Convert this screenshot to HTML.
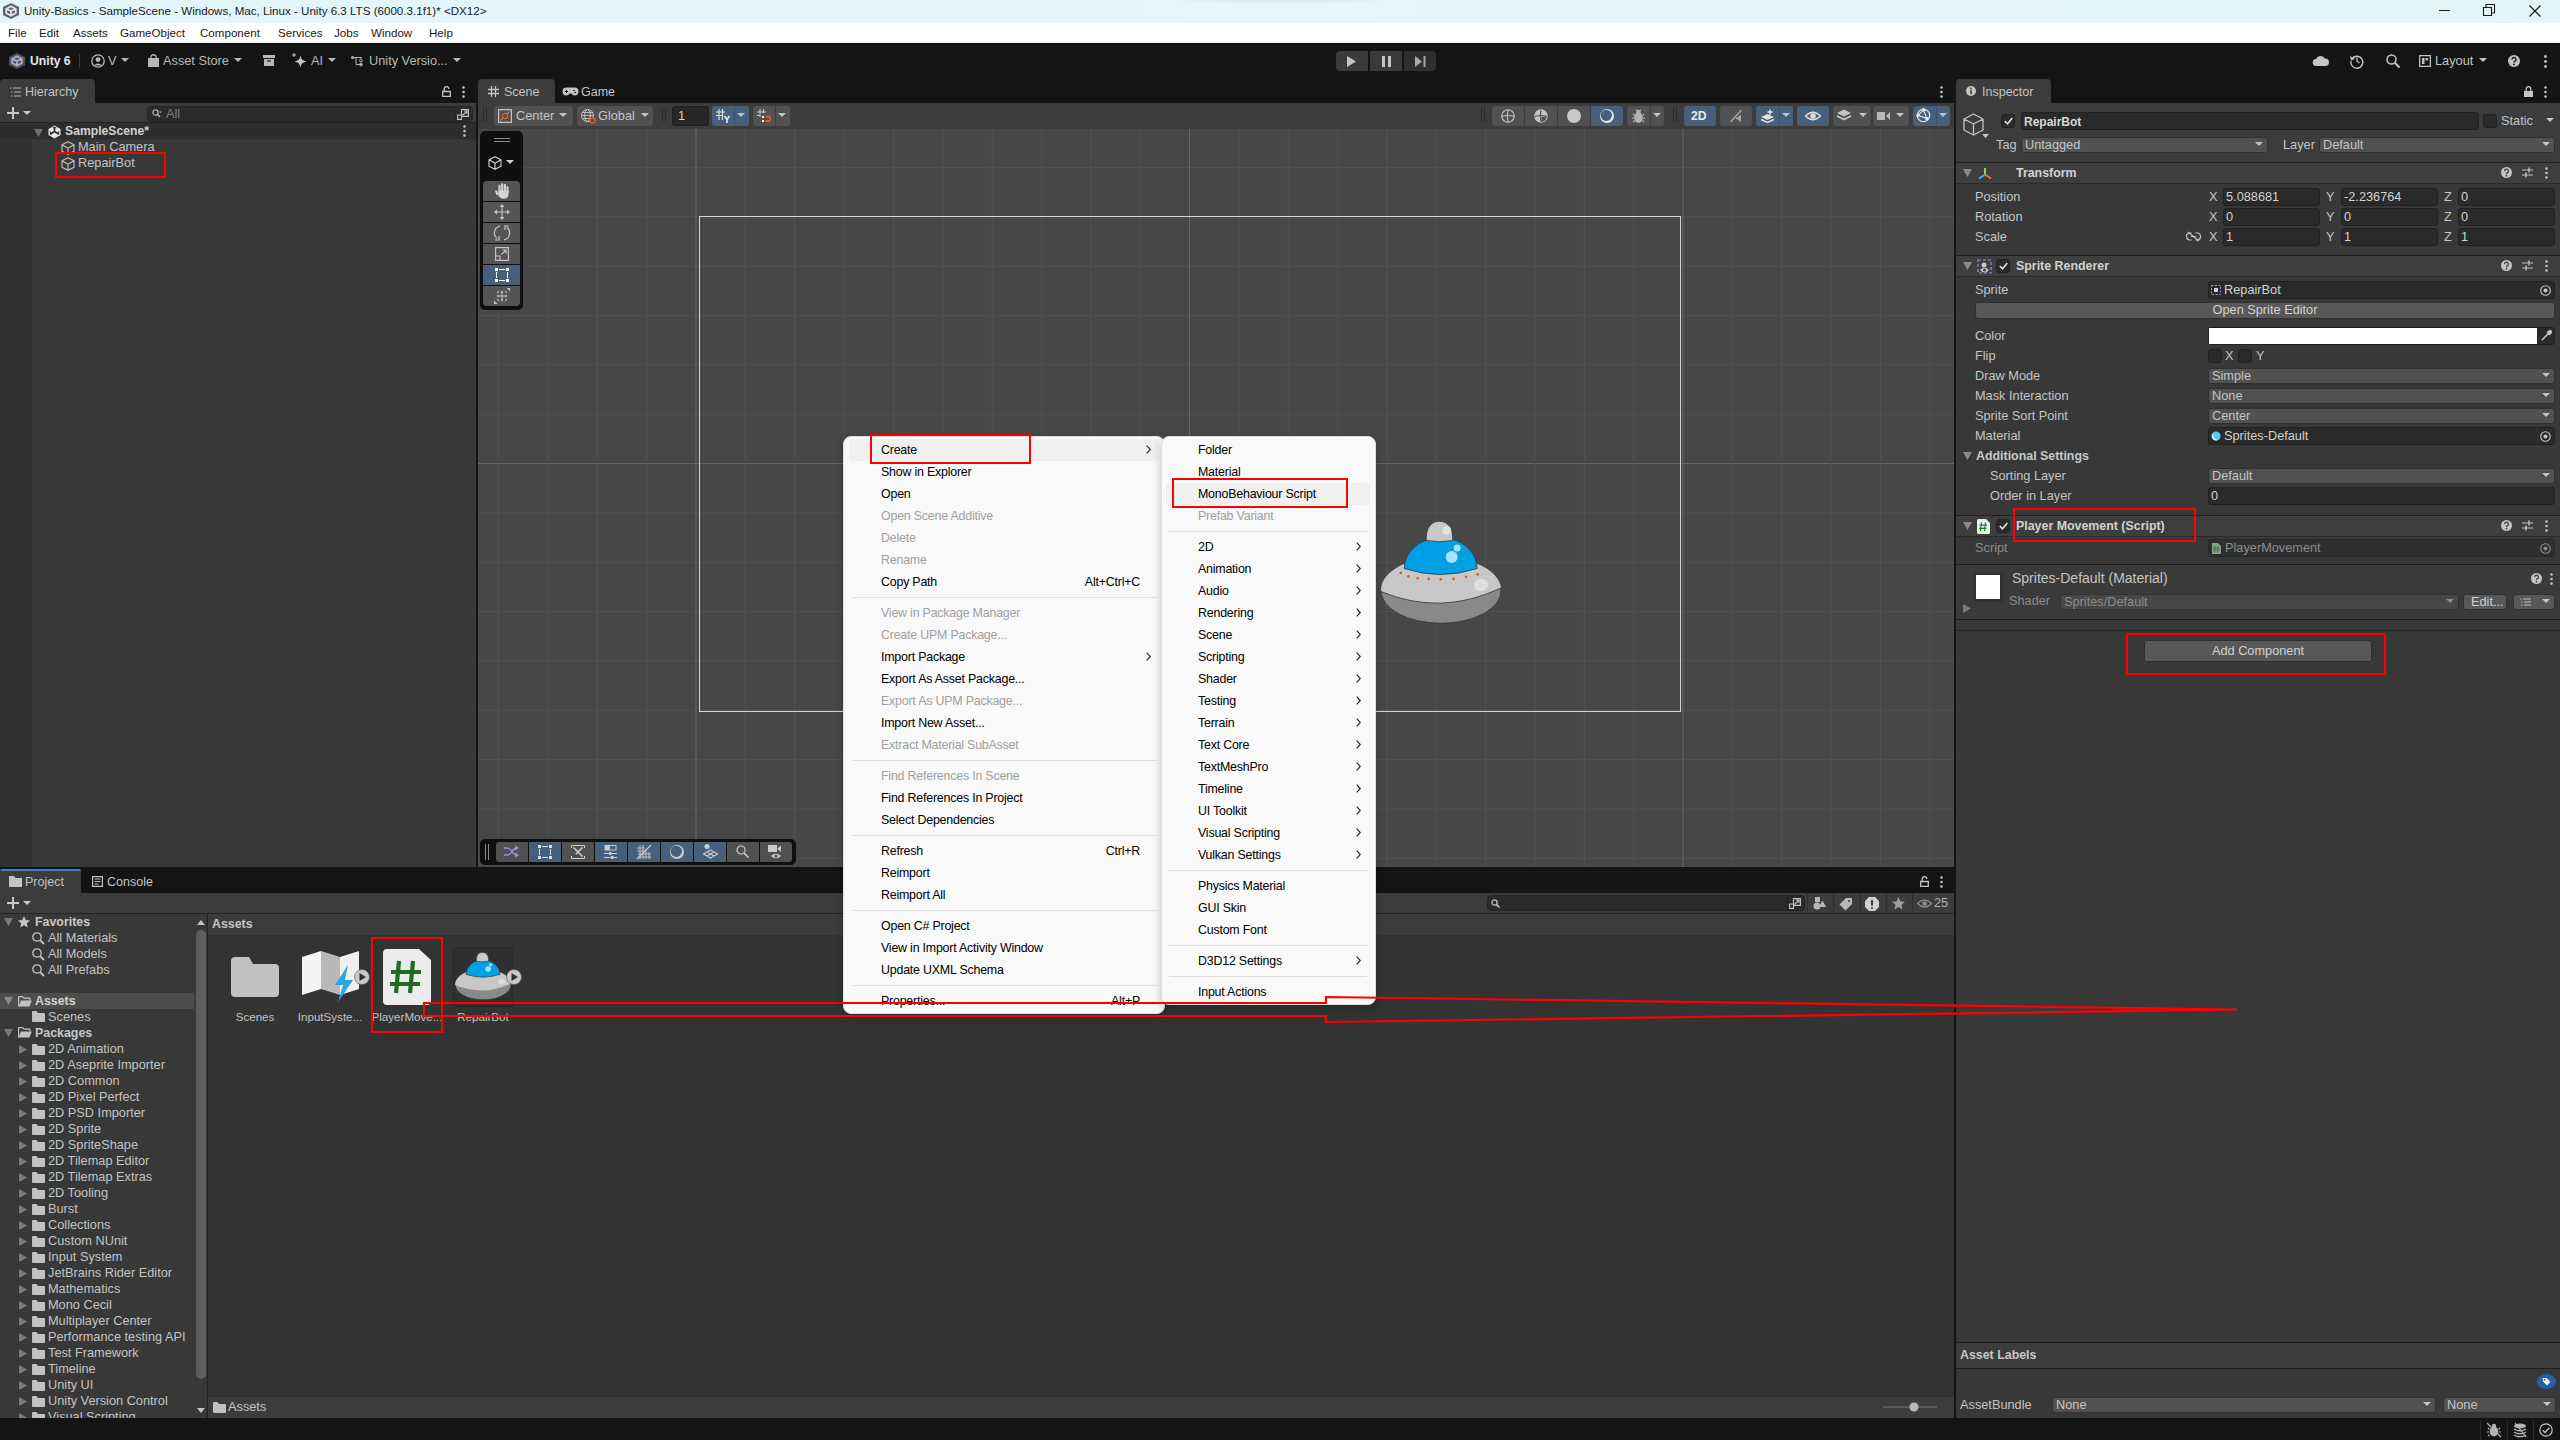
<!DOCTYPE html>
<html><head><meta charset="utf-8"><style>
*{margin:0;padding:0;box-sizing:border-box}
html,body{width:2560px;height:1440px;overflow:hidden;background:#141414;font-family:"Liberation Sans",sans-serif;font-size:12.75px;color:#c4c4c4}
.a{position:absolute}
.t{position:absolute;white-space:nowrap;line-height:14px;height:14px}
.b{font-weight:bold}
svg.i{position:absolute;overflow:visible}
.mi{position:absolute;white-space:nowrap;font-size:12px;line-height:14px;color:#1a1a1a}
.cm{position:absolute;white-space:nowrap;font-size:12.4px;line-height:14px;color:#000;letter-spacing:-0.2px;margin-top:1px}
.cm.d{color:#a0a0a0}
.fld{position:absolute;background:#2a2a2a;border:1px solid #212121;border-radius:3px}
.dd{position:absolute;background:#515151;border:1px solid #303030;border-radius:3px}
.btn{position:absolute;background:#585858;border:1px solid #303030;border-radius:3px}
</style></head><body>
<div class="a" style="left:0px;top:0px;width:2560px;height:23px;background:linear-gradient(90deg,#e2f5f9 0%,#e4f6fa 45%,#e7f7fb 50%,#e4f6fa 55%,#e2f5f9 100%)"></div>
<div class="a" style="left:1160px;top:-6px;width:240px;height:10px;background:radial-gradient(ellipse at center,rgba(150,170,170,0.28) 0%,rgba(150,170,170,0) 70%)"></div>
<svg class="i" style="left:3px;top:3px;" width="16" height="16" viewBox="0 0 16 16"><path d="M8.0 0L16 4.0V12.0L8.0 16L0 12.0V4.0Z" fill="#5a6470"/><path d="M8.0 3.2L12.8 5.92V10.08L8.0 12.8L3.2 10.08V5.92Z M8.0 8.0L12.8 5.92 M8.0 8.0L3.2 5.92 M8.0 8.0V12.8" fill="none" stroke="#dfe3e8" stroke-width="1.8"/></svg>
<div class="t" style="left:24px;top:4px;font-size:11.6px;color:#1a1a1a">Unity-Basics - SampleScene - Windows, Mac, Linux - Unity 6.3 LTS (6000.3.1f1)* &lt;DX12&gt;</div>
<div class="a" style="left:2439px;top:10px;width:11px;height:1px;background:#1a1a1a"></div>
<svg class="i" style="left:2483px;top:4px;" width="12" height="12" viewBox="0 0 12 12"><path d="M0.5 3.5H8.5V11.5H0.5Z M3 3.5V0.5H11.5V9H8.5" fill="none" stroke="#1a1a1a" stroke-width="1.1"/></svg>
<svg class="i" style="left:2529px;top:5px;" width="12" height="12" viewBox="0 0 12 12"><path d="M0.5 0.5L11.5 11.5M11.5 0.5L0.5 11.5" stroke="#1a1a1a" stroke-width="1.2"/></svg>
<div class="a" style="left:0px;top:23px;width:2560px;height:20px;background:#fff"></div>
<div class="a" style="left:0px;top:42px;width:2560px;height:1px;background:#ececec"></div>
<div class="mi" style="left:8px;top:26px;font-size:11.6px">File</div>
<div class="mi" style="left:39px;top:26px;font-size:11.6px">Edit</div>
<div class="mi" style="left:73px;top:26px;font-size:11.6px">Assets</div>
<div class="mi" style="left:120px;top:26px;font-size:11.6px">GameObject</div>
<div class="mi" style="left:200px;top:26px;font-size:11.6px">Component</div>
<div class="mi" style="left:278px;top:26px;font-size:11.6px">Services</div>
<div class="mi" style="left:334px;top:26px;font-size:11.6px">Jobs</div>
<div class="mi" style="left:371px;top:26px;font-size:11.6px">Window</div>
<div class="mi" style="left:429px;top:26px;font-size:11.6px">Help</div>
<div class="a" style="left:0px;top:43px;width:2560px;height:36px;background:#141414"></div>
<svg class="i" style="left:9px;top:53px;" width="16" height="16" viewBox="0 0 16 16"><path d="M8.0 0L16 4.0V12.0L8.0 16L0 12.0V4.0Z" fill="#4b5563"/><path d="M8.0 3.2L12.8 5.92V10.08L8.0 12.8L3.2 10.08V5.92Z M8.0 8.0L12.8 5.92 M8.0 8.0L3.2 5.92 M8.0 8.0V12.8" fill="none" stroke="#aab1bb" stroke-width="1.8"/></svg>
<div class="t b" style="left:30px;top:54px;color:#e6e6e6;font-size:12.2px">Unity 6</div>
<div class="a" style="left:79px;top:54px;width:1px;height:14px;background:#3a3a3a"></div>
<svg class="i" style="left:91px;top:54px;" width="14" height="14" viewBox="0 0 14 14"><circle cx="7" cy="7" r="6.2" fill="none" stroke="#b8b8b8" stroke-width="1.3"/><circle cx="7" cy="5.6" r="2.4" fill="#b8b8b8"/><path d="M2.8 11.5Q7 7.5 11.2 11.5" fill="#b8b8b8"/></svg>
<div class="t " style="left:108px;top:54px;color:#b8b8b8">V</div>
<svg class="i" style="left:121px;top:58px;" width="8" height="5" viewBox="0 0 8 5"><path d="M0 0H8L4 4Z" fill="#b8b8b8"/></svg>
<svg class="i" style="left:148px;top:54px;" width="11" height="13" viewBox="0 0 11 13"><path d="M0 4H11V13H0Z" fill="#b8b8b8"/><path d="M3 4V2Q5.5 -0.5 8 2V4" fill="none" stroke="#b8b8b8" stroke-width="1.2"/></svg>
<div class="t " style="left:163px;top:54px;color:#b8b8b8">Asset Store</div>
<svg class="i" style="left:234px;top:58px;" width="8" height="5" viewBox="0 0 8 5"><path d="M0 0H8L4 4Z" fill="#b8b8b8"/></svg>
<svg class="i" style="left:263px;top:55px;" width="12" height="11" viewBox="0 0 12 11"><path d="M0 0H12V3H0Z M1 4H11V11H1Z" fill="#b8b8b8"/><path d="M4 6H8" stroke="#141414" stroke-width="1.2"/></svg>
<svg class="i" style="left:292px;top:53px;" width="15" height="15" viewBox="0 0 15 15"><path d="M8.5 2.5Q9.2 7.8 14.5 8.5Q9.2 9.2 8.5 14.5Q7.8 9.2 2.5 8.5Q7.8 7.8 8.5 2.5Z" fill="#c4c4c4"/><path d="M2 0V4M0 2H4" stroke="#c4c4c4" stroke-width="1.1"/></svg>
<div class="t " style="left:311px;top:54px;color:#b8b8b8">AI</div>
<svg class="i" style="left:328px;top:58px;" width="8" height="5" viewBox="0 0 8 5"><path d="M0 0H8L4 4Z" fill="#b8b8b8"/></svg>
<svg class="i" style="left:351px;top:56px;" width="12" height="10" viewBox="0 0 12 10"><circle cx="1.5" cy="1.5" r="1.5" fill="#b8b8b8"/><path d="M1.5 1.5H11M5 1.5V8.5H11" fill="none" stroke="#b8b8b8" stroke-width="1"/><circle cx="10" cy="4.5" r="1.4" fill="none" stroke="#b8b8b8"/><circle cx="10" cy="8.5" r="1.4" fill="none" stroke="#b8b8b8"/></svg>
<div class="t " style="left:369px;top:54px;color:#b8b8b8">Unity Versio...</div>
<svg class="i" style="left:453px;top:58px;" width="8" height="5" viewBox="0 0 8 5"><path d="M0 0H8L4 4Z" fill="#b8b8b8"/></svg>
<div class="a" style="left:1336px;top:51px;width:32px;height:20px;background:#3a3a3a;border-radius:4px 0 0 4px"></div>
<div class="a" style="left:1370px;top:51px;width:32px;height:20px;background:#3a3a3a"></div>
<div class="a" style="left:1404px;top:51px;width:32px;height:20px;background:#2e2e2e;border-radius:0 4px 4px 0"></div>
<svg class="i" style="left:1347px;top:56px;" width="10" height="11" viewBox="0 0 10 11"><path d="M0 0L9 5.5L0 11Z" fill="#c4c4c4"/></svg>
<svg class="i" style="left:1382px;top:56px;" width="9" height="11" viewBox="0 0 9 11"><path d="M0 0H3V11H0Z M6 0H9V11H6Z" fill="#c4c4c4"/></svg>
<svg class="i" style="left:1415px;top:56px;" width="11" height="11" viewBox="0 0 11 11"><path d="M0 0L7 5.5L0 11Z M8.5 0H10.5V11H8.5Z" fill="#a8a8a8"/></svg>
<svg class="i" style="left:2313px;top:55px;" width="16" height="11" viewBox="0 0 16 11"><path d="M3.5 11A3.5 3.5 0 0 1 3 4A5 5 0 0 1 12 3.5A3.7 3.7 0 0 1 12.5 11Z" fill="#c4c4c4"/></svg>
<svg class="i" style="left:2350px;top:54px;" width="14" height="14" viewBox="0 0 14 14"><path d="M2.2 4.5A6 6 0 1 1 1 7" fill="none" stroke="#c4c4c4" stroke-width="1.4"/><path d="M0 2L1 6.5L5 5Z" fill="#c4c4c4"/><path d="M7 3.5V7.2L9.5 9" fill="none" stroke="#c4c4c4" stroke-width="1.3"/></svg>
<svg class="i" style="left:2386px;top:54px;" width="14" height="14" viewBox="0 0 14 14"><circle cx="5.5" cy="5.5" r="4.5" fill="none" stroke="#c4c4c4" stroke-width="1.5"/><path d="M9 9L13.5 13.5" stroke="#c4c4c4" stroke-width="2"/></svg>
<svg class="i" style="left:2419px;top:55px;" width="12" height="12" viewBox="0 0 12 12"><path d="M0.7 0.7H11.3V11.3H0.7Z" fill="none" stroke="#c4c4c4" stroke-width="1.3"/><path d="M3 3H5.5V9H3Z M6.5 3H9V5.5H6.5Z" fill="#c4c4c4"/></svg>
<div class="t " style="left:2435px;top:54px;color:#c4c4c4">Layout</div>
<svg class="i" style="left:2479px;top:58px;" width="8" height="5" viewBox="0 0 8 5"><path d="M0 0H8L4 4Z" fill="#c4c4c4"/></svg>
<svg class="i" style="left:2508px;top:55px;" width="12" height="12" viewBox="0 0 12 12"><circle cx="6" cy="6" r="6" fill="#c4c4c4"/><path d="M4 4.6A2 2 0 1 1 6.8 6.3Q6 6.8 6 7.6" fill="none" stroke="#141414" stroke-width="1.4"/><circle cx="6" cy="9.4" r="0.9" fill="#141414"/></svg>
<svg class="i" style="left:2544px;top:55px;" width="3" height="13" viewBox="0 0 3 13"><circle cx="1.5" cy="1.5" r="1.4" fill="#c4c4c4"/><circle cx="1.5" cy="6.5" r="1.4" fill="#c4c4c4"/><circle cx="1.5" cy="11.5" r="1.4" fill="#c4c4c4"/></svg>
<div class="a" style="left:0px;top:79px;width:95px;height:24px;background:#3c3c3c;border-radius:4px 4px 0 0"></div>
<svg class="i" style="left:10px;top:87px;" width="11" height="10" viewBox="0 0 11 10"><path d="M3 1H11M4 5H11M4 9H11" stroke="#b8b8b8" stroke-width="1.2"/><path d="M0 1H1.5M1 5H2.5M1 9H2.5" stroke="#b8b8b8" stroke-width="1.2"/></svg>
<div class="t " style="left:25px;top:85px;color:#c4c4c4;font-size:12.5px">Hierarchy</div>
<svg class="i" style="left:442px;top:86px;" width="9" height="11" viewBox="0 0 9 11"><path d="M0.7 5.5H8.3V10.3H0.7Z" fill="none" stroke="#c4c4c4" stroke-width="1.3"/><path d="M2.2 5.5V3A2.3 2.3 0 0 1 6.8 3" fill="none" stroke="#c4c4c4" stroke-width="1.3"/></svg>
<svg class="i" style="left:462px;top:86px;" width="3" height="12" viewBox="0 0 3 12"><circle cx="1.5" cy="1.5" r="1.3" fill="#c4c4c4"/><circle cx="1.5" cy="6" r="1.3" fill="#c4c4c4"/><circle cx="1.5" cy="10.5" r="1.3" fill="#c4c4c4"/></svg>
<div class="a" style="left:0px;top:103px;width:477px;height:20px;background:#3c3c3c"></div>
<svg class="i" style="left:7px;top:107px;" width="12" height="12" viewBox="0 0 12 12"><path d="M6 0V12M0 6H12" stroke="#c8c8c8" stroke-width="2"/></svg><svg class="i" style="left:23px;top:111px;" width="8" height="4" viewBox="0 0 8 4"><path d="M0 0H8L4 4Z" fill="#c8c8c8"/></svg>
<div class="a" style="left:147px;top:106px;width:326px;height:16px;background:#2a2a2a;border:1px solid #242424;border-radius:4px"></div>
<svg class="i" style="left:152px;top:109px;" width="10" height="9" viewBox="0 0 10 9"><circle cx="3.5" cy="3.5" r="2.6" fill="none" stroke="#b0b0b0" stroke-width="1.3"/><path d="M5.4 5.4L8 8" stroke="#b0b0b0" stroke-width="1.5"/><path d="M7 2.5H10L8.5 4Z" fill="#b0b0b0"/></svg>
<div class="t " style="left:166px;top:107px;color:#7f7f7f">All</div>
<div class="a" style="left:455px;top:107px;width:1px;height:14px;background:#242424"></div>
<svg class="i" style="left:457px;top:109px;" width="12" height="11" viewBox="0 0 12 11"><path d="M4.5 0.6H11.4V7.4H4.5Z M0.6 6H4.5V10.4H0.6Z" fill="none" stroke="#c4c4c4" stroke-width="1.1"/><path d="M5.5 6.5L10 2M7 2H10V5" fill="none" stroke="#c4c4c4" stroke-width="1.1"/></svg>
<div class="a" style="left:0px;top:122px;width:477px;height:1px;background:#232323"></div>
<div class="a" style="left:0px;top:123px;width:477px;height:744px;background:#383838"></div>
<div class="a" style="left:0px;top:139px;width:32px;height:728px;background:#313131"></div>
<div class="a" style="left:0px;top:123px;width:477px;height:16px;background:#2d2d2d"></div>
<div class="a" style="left:0px;top:139px;width:477px;height:1px;background:#353535"></div>
<svg class="i" style="left:34px;top:129px;" width="9" height="8" viewBox="0 0 9 8"><path d="M0 0H9L4.5 8Z" fill="#6f6f6f"/></svg>
<svg class="i" style="left:48px;top:125px;" width="13" height="14" viewBox="0 0 13 14"><path d="M6.5 0.5L12.5 4V10L6.5 13.5L0.5 10V4Z" fill="#e8e8e8"/><path d="M6.5 1.8V6.5M6.5 6.5L2 9.2M6.5 6.5L11 9.2" stroke="#2d2d2d" stroke-width="1.6"/><path d="M4.7 2.8H8.3M1.8 6.2L3.6 9.4M11.2 6.2L9.4 9.4" stroke="#2d2d2d" stroke-width="1"/></svg>
<div class="t b" style="left:65px;top:124px;color:#d2d2d2;font-size:12.2px">SampleScene*</div>
<svg class="i" style="left:463px;top:125px;" width="3" height="12" viewBox="0 0 3 12"><circle cx="1.5" cy="1.5" r="1.3" fill="#c4c4c4"/><circle cx="1.5" cy="6" r="1.3" fill="#c4c4c4"/><circle cx="1.5" cy="10.5" r="1.3" fill="#c4c4c4"/></svg>
<svg class="i" style="left:61px;top:141px;" width="14" height="14" viewBox="0 0 14 14"><path d="M7.0 0.8L13 3.7800000000000002V10.219999999999999L7.0 13.2L1 10.219999999999999V3.7800000000000002Z M1 3.7800000000000002L7.0 7.28L13 3.7800000000000002 M7.0 7.28V13.2" fill="none" stroke="#c4c4c4" stroke-width="1.1" stroke-linejoin="round"/></svg>
<div class="t " style="left:78px;top:140px;color:#c4c4c4">Main Camera</div>
<svg class="i" style="left:61px;top:157px;" width="14" height="14" viewBox="0 0 14 14"><path d="M7.0 0.8L13 3.7800000000000002V10.219999999999999L7.0 13.2L1 10.219999999999999V3.7800000000000002Z M1 3.7800000000000002L7.0 7.28L13 3.7800000000000002 M7.0 7.28V13.2" fill="none" stroke="#c4c4c4" stroke-width="1.1" stroke-linejoin="round"/></svg>
<div class="t " style="left:78px;top:156px;color:#c4c4c4">RepairBot</div>
<div class="a" style="left:55px;top:152px;width:111px;height:26px;border:2px solid #f00"></div>
<div class="a" style="left:476px;top:79px;width:2px;height:788px;background:#141414"></div>
<div class="a" style="left:478px;top:79px;width:77px;height:24px;background:#3c3c3c;border-radius:4px 4px 0 0"></div>
<svg class="i" style="left:488px;top:86px;" width="11" height="11" viewBox="0 0 11 11"><path d="M3.5 0V11M7.5 0V11M0 3.5H11M0 7.5H11" stroke="#c4c4c4" stroke-width="1.3"/></svg>
<div class="t " style="left:504px;top:85px;font-size:12.5px">Scene</div>
<svg class="i" style="left:563px;top:87px;" width="15" height="9" viewBox="0 0 15 9"><path d="M3.5 0.5H11.5A3.5 3.5 0 0 1 11.5 8.5Q9.5 8.5 8.5 6.5H6.5Q5.5 8.5 3.5 8.5A3.5 3.5 0 0 1 3.5 0.5Z" fill="#c4c4c4"/><path d="M2 4.5H5M3.5 3V6" stroke="#141414" stroke-width="1"/><circle cx="11" cy="3.5" r="0.8" fill="#141414"/><circle cx="12.2" cy="5.5" r="0.8" fill="#141414"/></svg>
<div class="t " style="left:581px;top:85px;font-size:12.5px">Game</div>
<svg class="i" style="left:1940px;top:86px;" width="3" height="12" viewBox="0 0 3 12"><circle cx="1.5" cy="1.5" r="1.3" fill="#c4c4c4"/><circle cx="1.5" cy="6" r="1.3" fill="#c4c4c4"/><circle cx="1.5" cy="10.5" r="1.3" fill="#c4c4c4"/></svg>
<div class="a" style="left:478px;top:103px;width:1476px;height:26px;background:#3c3c3c"></div>
<div class="a" style="left:483px;top:108px;width:1px;height:14px;background:#2a2a2a"></div><div class="a" style="left:486px;top:108px;width:1px;height:14px;background:#2a2a2a"></div>
<div class="a" style="left:494px;top:106px;width:79px;height:20px;background:#515151;border-radius:3px"></div>
<svg class="i" style="left:498px;top:109px;" width="14" height="14" viewBox="0 0 14 14"><path d="M0.6 0.6H13.4V13.4H0.6Z" fill="none" stroke="#c4c4c4" stroke-width="1.2"/><path d="M2.5 11.5L11.5 2.5" stroke="#c4c4c4" stroke-width="0.8"/><circle cx="7" cy="7" r="2.6" fill="#515151" stroke="#ee5a24" stroke-width="1.3"/></svg>
<div class="t " style="left:516px;top:109px;">Center</div>
<svg class="i" style="left:559px;top:113px;" width="8" height="5" viewBox="0 0 8 5"><path d="M0 0H8L4 4Z" fill="#c4c4c4"/></svg>
<div class="a" style="left:577px;top:106px;width:76px;height:20px;background:#515151;border-radius:3px"></div>
<svg class="i" style="left:581px;top:109px;" width="15" height="15" viewBox="0 0 15 15"><circle cx="6.5" cy="6.5" r="6" fill="none" stroke="#c4c4c4" stroke-width="1"/><ellipse cx="6.5" cy="6.5" rx="2.8" ry="6" fill="none" stroke="#c4c4c4" stroke-width="1"/><path d="M0.5 6.5H12.5M1.5 3.5H11.5M1.5 9.5H11.5" stroke="#c4c4c4" stroke-width="0.9"/><circle cx="11.5" cy="11.5" r="2.6" fill="#515151" stroke="#ee5a24" stroke-width="1.3"/></svg>
<div class="t " style="left:598px;top:109px;">Global</div>
<svg class="i" style="left:641px;top:113px;" width="8" height="5" viewBox="0 0 8 5"><path d="M0 0H8L4 4Z" fill="#c4c4c4"/></svg>
<div class="a" style="left:662px;top:108px;width:1px;height:14px;background:#2a2a2a"></div><div class="a" style="left:665px;top:108px;width:1px;height:14px;background:#2a2a2a"></div>
<div class="a" style="left:672px;top:106px;width:37px;height:20px;background:#262626;border:1px solid #1e1e1e;border-radius:3px"></div>
<div class="t " style="left:678px;top:109px;color:#d2d2d2">1</div>
<div class="a" style="left:712px;top:106px;width:37px;height:20px;background:#46607c;border-radius:3px"></div>
<div class="a" style="left:734px;top:106px;width:1px;height:20px;background:#3a4f69"></div>
<svg class="i" style="left:716px;top:109px;" width="15" height="14" viewBox="0 0 15 14"><path d="M3 0V11M6.5 0V11M0 3H9M0 6.5H7" stroke="#e8e8e8" stroke-width="1.1"/><path d="M8.5 7L11 10.5L13.5 7M11 10.5V14" fill="none" stroke="#e8e8e8" stroke-width="1.6"/></svg>
<svg class="i" style="left:737px;top:113px;" width="8" height="5" viewBox="0 0 8 5"><path d="M0 0H8L4 4Z" fill="#c4c4c4"/></svg>
<div class="a" style="left:753px;top:106px;width:37px;height:20px;background:#515151;border-radius:3px"></div>
<div class="a" style="left:775px;top:106px;width:1px;height:20px;background:#3e3e3e"></div>
<svg class="i" style="left:757px;top:109px;" width="15" height="14" viewBox="0 0 15 14"><path d="M3 0V8M6.5 0V4M0 3H9M0 6.5H2.5" stroke="#d0d0d0" stroke-width="1"/><rect x="5" y="7" width="2" height="2" fill="#fff"/><rect x="5" y="11" width="2" height="2" fill="#fff"/><path d="M9 7.5H11.5A2.3 2.3 0 0 1 11.5 12H8.5" fill="none" stroke="#ee5a24" stroke-width="1.8"/></svg>
<svg class="i" style="left:778px;top:113px;" width="8" height="5" viewBox="0 0 8 5"><path d="M0 0H8L4 4Z" fill="#c4c4c4"/></svg>
<div class="a" style="left:1481px;top:108px;width:1px;height:14px;background:#2a2a2a"></div><div class="a" style="left:1484px;top:108px;width:1px;height:14px;background:#2a2a2a"></div>
<div class="a" style="left:1492px;top:106px;width:32px;height:20px;background:#515151;border-radius:3px 0 0 3px"></div>
<div class="a" style="left:1525px;top:106px;width:32px;height:20px;background:#515151;border-radius:0"></div>
<div class="a" style="left:1558px;top:106px;width:32px;height:20px;background:#515151;border-radius:0"></div>
<div class="a" style="left:1591px;top:106px;width:32px;height:20px;background:#46607c;border-radius:0 3px 3px 0"></div>
<svg class="i" style="left:1501px;top:109px;" width="14" height="14" viewBox="0 0 14 14"><circle cx="7" cy="7" r="6.2" fill="none" stroke="#c4c4c4" stroke-width="1.1"/><path d="M0.8 7.5Q7 5.5 13.2 7.5M7 0.8Q5.5 7 7 13.2" fill="none" stroke="#c4c4c4" stroke-width="1.1"/></svg>
<svg class="i" style="left:1534px;top:109px;" width="14" height="14" viewBox="0 0 14 14"><circle cx="7" cy="7" r="6.2" fill="#c4c4c4" stroke="#c4c4c4" stroke-width="1.1"/><path d="M1 7.5Q7 5.5 13 7.5M7 1Q5.5 7 7 13" fill="none" stroke="#515151" stroke-width="1.1"/><path d="M7.5 7.5L12.5 8A6 6 0 0 1 7.5 13Z" fill="#515151"/></svg>
<svg class="i" style="left:1567px;top:109px;" width="14" height="14" viewBox="0 0 14 14"><circle cx="7" cy="7" r="7" fill="#c8c8c8"/></svg>
<svg class="i" style="left:1600px;top:109px;" width="14" height="14" viewBox="0 0 14 14"><circle cx="7" cy="7" r="7" fill="#e6e6e6"/><circle cx="6.3" cy="6.3" r="5.6" fill="#46607c"/></svg>
<div class="a" style="left:1627px;top:106px;width:37px;height:20px;background:#515151;border-radius:3px"></div>
<div class="a" style="left:1650px;top:106px;width:1px;height:20px;background:#3e3e3e"></div>
<svg class="i" style="left:1632px;top:109px;" width="13" height="14" viewBox="0 0 13 14"><ellipse cx="6.5" cy="8.5" rx="4.3" ry="5.2" fill="#b4b4b4"/><circle cx="6.5" cy="3" r="2.2" fill="#b4b4b4"/><path d="M1 5L2.5 6.5M12 5L10.5 6.5M0 9H2M13 9H11M1 13L2.5 11.5M12 13L10.5 11.5M4 0.5L5 1.8M9 0.5L8 1.8" stroke="#b4b4b4" stroke-width="1.1"/></svg>
<svg class="i" style="left:1653px;top:113px;" width="8" height="5" viewBox="0 0 8 5"><path d="M0 0H8L4 4Z" fill="#c4c4c4"/></svg>
<div class="a" style="left:1673px;top:108px;width:1px;height:14px;background:#2a2a2a"></div><div class="a" style="left:1676px;top:108px;width:1px;height:14px;background:#2a2a2a"></div>
<div class="a" style="left:1684px;top:106px;width:32px;height:20px;background:#46607c;border-radius:3px"></div>
<div class="t b" style="left:1691px;top:109px;color:#e8e8e8;font-size:12.2px">2D</div>
<div class="a" style="left:1720px;top:106px;width:32px;height:20px;background:#515151;border-radius:3px"></div>
<svg class="i" style="left:1729px;top:109px;" width="14" height="14" viewBox="0 0 14 14"><path d="M1.5 13L12.5 1" stroke="#a8a8a8" stroke-width="1.4"/><path d="M6 8.5H8.5L12 5.5V13L8.5 10.5Z" fill="#a8a8a8"/></svg>
<div class="a" style="left:1756px;top:106px;width:37px;height:20px;background:#46607c;border-radius:3px"></div>
<div class="a" style="left:1779px;top:106px;width:1px;height:20px;background:#3a4f69"></div>
<svg class="i" style="left:1760px;top:108px;" width="15" height="15" viewBox="0 0 15 15"><path d="M1 9L7.5 6L14 9L7.5 12Z" fill="#e0e0e0"/><path d="M1 11.5L7.5 14.5L14 11.5" fill="none" stroke="#e0e0e0" stroke-width="1.4"/><path d="M10 0.5L11 3L13.5 4L11 5L10 7.5L9 5L6.5 4L9 3Z" fill="#e0e0e0"/></svg>
<svg class="i" style="left:1782px;top:113px;" width="8" height="5" viewBox="0 0 8 5"><path d="M0 0H8L4 4Z" fill="#c4c4c4"/></svg>
<div class="a" style="left:1797px;top:106px;width:32px;height:20px;background:#46607c;border-radius:3px"></div>
<svg class="i" style="left:1805px;top:111px;" width="16" height="10" viewBox="0 0 16 10"><path d="M0.5 5Q8 -2.5 15.5 5Q8 12.5 0.5 5Z" fill="none" stroke="#dcdcdc" stroke-width="1.3"/><circle cx="8" cy="5" r="2.8" fill="#dcdcdc"/></svg>
<div class="a" style="left:1833px;top:106px;width:38px;height:20px;background:#515151;border-radius:3px"></div>
<svg class="i" style="left:1837px;top:109px;" width="14" height="13" viewBox="0 0 14 13"><path d="M0 4L7 0.5L14 4L7 7.5Z" fill="#c4c4c4"/><path d="M0 7L7 10.5L14 7" fill="none" stroke="#c4c4c4" stroke-width="1.6"/></svg>
<svg class="i" style="left:1859px;top:113px;" width="8" height="5" viewBox="0 0 8 5"><path d="M0 0H8L4 4Z" fill="#c4c4c4"/></svg>
<div class="a" style="left:1873px;top:106px;width:36px;height:20px;background:#515151;border-radius:3px"></div>
<svg class="i" style="left:1877px;top:111px;" width="13" height="10" viewBox="0 0 13 10"><path d="M0 1H8V9H0Z M9 5L13 1V9Z" fill="#b8b8b8"/></svg>
<svg class="i" style="left:1896px;top:113px;" width="8" height="5" viewBox="0 0 8 5"><path d="M0 0H8L4 4Z" fill="#c4c4c4"/></svg>
<div class="a" style="left:1913px;top:106px;width:37px;height:20px;background:#46607c;border-radius:3px"></div>
<div class="a" style="left:1936px;top:106px;width:1px;height:20px;background:#3a4f69"></div>
<svg class="i" style="left:1916px;top:108px;" width="15" height="15" viewBox="0 0 15 15"><circle cx="7.5" cy="7.5" r="6.2" fill="none" stroke="#e6e6e6" stroke-width="1.3"/><path d="M7.5 1.8L2.2 7.2L10.8 10.5Z M2.2 7.2Q7 9 10.8 10.5" fill="none" stroke="#e6e6e6" stroke-width="1.1"/><circle cx="7.5" cy="1.8" r="1.7" fill="#e6e6e6"/><circle cx="2.2" cy="7.2" r="1.7" fill="#e6e6e6"/><circle cx="10.8" cy="10.5" r="1.7" fill="#e6e6e6"/></svg>
<svg class="i" style="left:1939px;top:113px;" width="8" height="5" viewBox="0 0 8 5"><path d="M0 0H8L4 4Z" fill="#c4c4c4"/></svg>
<div class="a" style="left:478px;top:129px;width:1476px;height:738px;background:#474747;overflow:hidden"></div>
<svg class="i" style="left:478px;top:129px" width="1476" height="738"><rect x="0" y="37.90" width="1476" height="1" fill="#515151"/><rect x="0" y="87.25" width="1476" height="1" fill="#515151"/><rect x="0" y="136.60" width="1476" height="1" fill="#515151"/><rect x="0" y="185.95" width="1476" height="1" fill="#515151"/><rect x="0" y="235.30" width="1476" height="1" fill="#515151"/><rect x="0" y="284.65" width="1476" height="1" fill="#515151"/><rect x="0" y="334.00" width="1476" height="1" fill="#666666"/><rect x="0" y="383.35" width="1476" height="1" fill="#515151"/><rect x="0" y="432.70" width="1476" height="1" fill="#515151"/><rect x="0" y="482.05" width="1476" height="1" fill="#515151"/><rect x="0" y="531.40" width="1476" height="1" fill="#515151"/><rect x="0" y="580.75" width="1476" height="1" fill="#515151"/><rect x="0" y="630.10" width="1476" height="1" fill="#515151"/><rect x="0" y="679.45" width="1476" height="1" fill="#515151"/><rect x="0" y="728.80" width="1476" height="1" fill="#515151"/><rect x="20.10" y="0" width="1" height="738" fill="#515151"/><rect x="69.45" y="0" width="1" height="738" fill="#515151"/><rect x="118.80" y="0" width="1" height="738" fill="#515151"/><rect x="168.15" y="0" width="1" height="738" fill="#515151"/><rect x="217.50" y="0" width="1" height="738" fill="#666666"/><rect x="266.85" y="0" width="1" height="738" fill="#515151"/><rect x="316.20" y="0" width="1" height="738" fill="#515151"/><rect x="365.55" y="0" width="1" height="738" fill="#515151"/><rect x="414.90" y="0" width="1" height="738" fill="#515151"/><rect x="464.25" y="0" width="1" height="738" fill="#515151"/><rect x="513.60" y="0" width="1" height="738" fill="#515151"/><rect x="562.95" y="0" width="1" height="738" fill="#515151"/><rect x="612.30" y="0" width="1" height="738" fill="#515151"/><rect x="661.65" y="0" width="1" height="738" fill="#515151"/><rect x="711.00" y="0" width="1" height="738" fill="#666666"/><rect x="760.35" y="0" width="1" height="738" fill="#515151"/><rect x="809.70" y="0" width="1" height="738" fill="#515151"/><rect x="859.05" y="0" width="1" height="738" fill="#515151"/><rect x="908.40" y="0" width="1" height="738" fill="#515151"/><rect x="957.75" y="0" width="1" height="738" fill="#515151"/><rect x="1007.10" y="0" width="1" height="738" fill="#515151"/><rect x="1056.45" y="0" width="1" height="738" fill="#515151"/><rect x="1105.80" y="0" width="1" height="738" fill="#515151"/><rect x="1155.15" y="0" width="1" height="738" fill="#515151"/><rect x="1204.50" y="0" width="1" height="738" fill="#666666"/><rect x="1253.85" y="0" width="1" height="738" fill="#515151"/><rect x="1303.20" y="0" width="1" height="738" fill="#515151"/><rect x="1352.55" y="0" width="1" height="738" fill="#515151"/><rect x="1401.90" y="0" width="1" height="738" fill="#515151"/><rect x="1451.25" y="0" width="1" height="738" fill="#515151"/></svg>
<div class="a" style="left:699px;top:216px;width:982px;height:496px;border:1.5px solid #d6d6d6"></div>
<svg class="i" style="left:0;top:0" width="2560" height="1440"><g transform="translate(1370.7,514.5)" stroke="#333" stroke-width="0.8"><ellipse cx="70.3" cy="76.2" rx="60" ry="32.6" fill="#898989"/><path d="M10.3 77A60 32.6 0 0 1 130.3 73.5Q70 102 10.3 77Z" fill="#c8c8c8" stroke="none"/><path d="M10.3 77Q70 102 130.3 73.5" fill="none"/><path d="M33.5 54A36.5 31 0 0 1 106.5 54Q70 66 33.5 54Z" fill="#00a0e4"/><circle cx="81" cy="42.5" r="6" fill="#a6e2fb" stroke="none"/><circle cx="86.5" cy="33.5" r="3.5" fill="#a6e2fb" stroke="none"/><path d="M55.5 26C55 14 60 6.8 68.75 6.8C77.5 6.8 82.5 14 82 26Q68.75 28.5 55.5 26Z" fill="#c8c8c8"/><circle cx="76.1" cy="15.9" r="4.4" fill="#e0e0e0" stroke="none"/><ellipse cx="110.3" cy="70.5" rx="7" ry="6.3" fill="#dedede" stroke="none"/><circle cx="30.1" cy="58.4" r="1.3" fill="#d0601a" stroke="none"/><circle cx="37.8" cy="61.9" r="1.3" fill="#d0601a" stroke="none"/><circle cx="47" cy="63.8" r="1.3" fill="#d0601a" stroke="none"/><circle cx="57.9" cy="64.4" r="1.3" fill="#d0601a" stroke="none"/><circle cx="70" cy="64.9" r="1.3" fill="#d0601a" stroke="none"/><circle cx="82.9" cy="64.4" r="1.3" fill="#d0601a" stroke="none"/><circle cx="95.3" cy="62.3" r="1.3" fill="#d0601a" stroke="none"/><circle cx="106.9" cy="59.9" r="1.3" fill="#d0601a" stroke="none"/></g></svg>
<div class="a" style="left:480px;top:131px;width:43px;height:179px;background:#0f0f0f;border-radius:5px"></div>
<div class="a" style="left:494px;top:138px;width:16px;height:1px;background:#8a8a8a"></div><div class="a" style="left:494px;top:141px;width:16px;height:1px;background:#8a8a8a"></div>
<svg class="i" style="left:488px;top:156px;" width="14" height="14" viewBox="0 0 14 14"><path d="M7.0 0.8L13 3.7800000000000002V10.219999999999999L7.0 13.2L1 10.219999999999999V3.7800000000000002Z M1 3.7800000000000002L7.0 7.28L13 3.7800000000000002 M7.0 7.28V13.2" fill="none" stroke="#d8d8d8" stroke-width="1.1" stroke-linejoin="round"/></svg>
<svg class="i" style="left:506px;top:160px;" width="8" height="5" viewBox="0 0 8 5"><path d="M0 0H8L4 4Z" fill="#d0d0d0"/></svg>
<div class="a" style="left:483px;top:181px;width:37px;height:20px;background:#555555;border-radius:4px 4px 0 0"></div>
<div class="a" style="left:483px;top:202px;width:37px;height:20px;background:#555555;border-radius:0"></div>
<div class="a" style="left:483px;top:223px;width:37px;height:20px;background:#555555;border-radius:0"></div>
<div class="a" style="left:483px;top:244px;width:37px;height:20px;background:#555555;border-radius:0"></div>
<div class="a" style="left:483px;top:265px;width:37px;height:20px;background:#46607c;border-radius:0"></div>
<div class="a" style="left:483px;top:286px;width:37px;height:20px;background:#555555;border-radius:0 0 4px 4px"></div>
<svg class="i" style="left:495px;top:183px;" width="15" height="16" viewBox="0 0 15 16"><g stroke="#d4d4d4" stroke-width="2.1" stroke-linecap="round"><path d="M4.5 8V2.8M7.2 7.5V1.2M9.9 7.5V1.8M12.5 8.5V4.2M2.3 11L1.2 8.3"/></g><path d="M3.4 7.5H13.6V10.5Q13.6 15.8 8.5 15.8Q5 15.8 3.2 12Z" fill="#d4d4d4"/></svg>
<svg class="i" style="left:494px;top:204px;" width="16" height="16" viewBox="0 0 16 16"><path d="M8 1V15M1 8H15" stroke="#c4c4c4" stroke-width="1.1"/><path d="M8 0L10.5 3H5.5Z M8 16L10.5 13H5.5Z M0 8L3 5.5V10.5Z M16 8L13 5.5V10.5Z" fill="#c4c4c4"/></svg>
<svg class="i" style="left:494px;top:225px;" width="16" height="16" viewBox="0 0 16 16"><path d="M6 1.2A7 7 0 0 0 3 13.5M10 14.8A7 7 0 0 0 13 2.5" fill="none" stroke="#c4c4c4" stroke-width="1.2"/><path d="M1 15H5V11 M15 1H11V5" fill="none" stroke="#c4c4c4" stroke-width="1.2"/></svg>
<svg class="i" style="left:495px;top:247px;" width="14" height="14" viewBox="0 0 14 14"><path d="M0.6 0.6H13.4V13.4H0.6Z M0.6 9H5V13.4" fill="none" stroke="#c4c4c4" stroke-width="1.2"/><path d="M6.5 7.5L11 3M7.5 3H11V6.5" fill="none" stroke="#c4c4c4" stroke-width="1.1"/></svg>
<svg class="i" style="left:495px;top:268px;" width="14" height="14" viewBox="0 0 14 14"><rect x="0" y="0" width="3" height="3" fill="#fff"/><rect x="11" y="0" width="3" height="3" fill="#fff"/><rect x="0" y="11" width="3" height="3" fill="#fff"/><rect x="11" y="11" width="3" height="3" fill="#fff"/><path d="M4 1.5H10M4 12.5H10M1.5 4V10M12.5 4V10" stroke="#fff" stroke-width="1"/></svg>
<svg class="i" style="left:494px;top:288px;" width="16" height="16" viewBox="0 0 16 16"><path d="M3.2 5A6 6 0 0 1 5 3.2M11 3.2A6 6 0 0 1 12.8 5M12.8 11A6 6 0 0 1 11 12.8M5 12.8A6 6 0 0 1 3.2 11" fill="none" stroke="#c4c4c4" stroke-width="1.1"/><path d="M8 3.5V12.5M3.5 8H12.5" stroke="#c4c4c4" stroke-width="1"/><path d="M8 2.5L9.5 4.5H6.5Z M8 13.5L9.5 11.5H6.5Z M2.5 8L4.5 6.5V9.5Z M13.5 8L11.5 6.5V9.5Z M0 16H3.5L0 12.5Z M16 0H12.5L16 3.5Z" fill="#c4c4c4"/></svg>
<div class="a" style="left:480px;top:839px;width:316px;height:26px;background:#0f0f0f;border-radius:5px"></div>
<div class="a" style="left:485px;top:844px;width:1px;height:16px;background:#8a8a8a"></div><div class="a" style="left:488px;top:844px;width:1px;height:16px;background:#8a8a8a"></div>
<div class="a" style="left:496px;top:842px;width:32px;height:20px;background:#515151;border-radius:3px 0 0 3px"></div>
<div class="a" style="left:529px;top:842px;width:32px;height:20px;background:#46607c;border-radius:0"></div>
<div class="a" style="left:562px;top:842px;width:32px;height:20px;background:#515151;border-radius:0"></div>
<div class="a" style="left:595px;top:842px;width:32px;height:20px;background:#46607c;border-radius:0"></div>
<div class="a" style="left:628px;top:842px;width:32px;height:20px;background:#46607c;border-radius:0"></div>
<div class="a" style="left:661px;top:842px;width:32px;height:20px;background:#46607c;border-radius:0"></div>
<div class="a" style="left:694px;top:842px;width:32px;height:20px;background:#46607c;border-radius:0"></div>
<div class="a" style="left:727px;top:842px;width:32px;height:20px;background:#515151;border-radius:0"></div>
<div class="a" style="left:760px;top:842px;width:32px;height:20px;background:#515151;border-radius:0 3px 3px 0"></div>
<svg class="i" style="left:504px;top:845px;" width="15" height="13" viewBox="0 0 15 13"><path d="M0 3H3Q6 3 8 6.5Q10 10 13 10M0 10H3Q6 10 8 6.5Q10 3 13 3" fill="none" stroke="#a98be8" stroke-width="1.3"/><path d="M11 0.5L15 3L11 5.5Z M11 7.5L15 10L11 12.5Z" fill="#a98be8"/></svg>
<svg class="i" style="left:538px;top:845px;" width="14" height="14" viewBox="0 0 14 14"><rect x="0" y="0" width="3" height="3" fill="#ddd"/><rect x="11" y="0" width="3" height="3" fill="#ddd"/><rect x="0" y="11" width="3" height="3" fill="#ddd"/><rect x="11" y="11" width="3" height="3" fill="#ddd"/><path d="M4 1.5H10M4 12.5H10M1.5 4V10M12.5 4V10" stroke="#ddd" stroke-width="1"/></svg>
<svg class="i" style="left:571px;top:845px;" width="14" height="14" viewBox="0 0 14 14"><path d="M0.5 3V0.5H13.5V3M0.5 11V13.5H13.5V11" fill="none" stroke="#ccc" stroke-width="1"/><path d="M2.5 2.5L11.5 11.5M11.5 2.5L5 9" stroke="#ccc" stroke-width="1.6"/></svg>
<svg class="i" style="left:604px;top:845px;" width="14" height="14" viewBox="0 0 14 14"><rect x="1" y="0.5" width="11" height="4.5" fill="none" stroke="#ccc"/><rect x="1" y="0.5" width="5" height="4.5" fill="#ccc"/><path d="M0 8.5H13M0 12.5H13" stroke="#ccc" stroke-width="1"/><rect x="5" y="7" width="2.5" height="3" fill="#ccc"/><rect x="7" y="11" width="2.5" height="3" fill="#ccc"/></svg>
<svg class="i" style="left:637px;top:845px;" width="14" height="14" viewBox="0 0 14 14"><path d="M3 0V14M6 0V14M9 4V14M12 7V14M0 3H8M0 6H9M1 9H14M1 12H14" stroke="#ccc" stroke-width="0.9"/><path d="M0 14L14 0" stroke="#ccc" stroke-width="1.1"/></svg>
<svg class="i" style="left:670px;top:845px;" width="14" height="14" viewBox="0 0 14 14"><circle cx="7" cy="7" r="7" fill="#cccccc"/><circle cx="6.3" cy="6.3" r="5.6" fill="#46607c"/></svg>
<svg class="i" style="left:703px;top:844px;" width="15" height="16" viewBox="0 0 15 16"><circle cx="4" cy="2.5" r="2.5" fill="#ccc"/><path d="M7.5 6L14.5 10L7.5 14L0.5 10Z M4 8L11 12M11 8L4 12" fill="none" stroke="#ccc" stroke-width="1.1"/></svg>
<svg class="i" style="left:736px;top:845px;" width="13" height="13" viewBox="0 0 13 13"><circle cx="5" cy="5" r="4" fill="none" stroke="#ccc" stroke-width="1.2"/><path d="M8 8L12.5 12.5" stroke="#ccc" stroke-width="1.6"/></svg>
<svg class="i" style="left:768px;top:844px;" width="15" height="16" viewBox="0 0 15 16"><path d="M0 1H9V8H0Z M9.5 4.5L13 1.5V8L9.5 5Z" fill="#ccc"/><path d="M3 12Q8 7.5 13 12Q8 16.5 3 12Z" fill="#ccc"/><circle cx="8" cy="12" r="1.6" fill="#555"/></svg>
<div class="a" style="left:1954px;top:79px;width:2px;height:1339px;background:#141414"></div>
<div class="a" style="left:1956px;top:79px;width:95px;height:24px;background:#3c3c3c;border-radius:4px 4px 0 0"></div>
<svg class="i" style="left:1966px;top:86px;" width="10" height="10" viewBox="0 0 10 10"><circle cx="5" cy="5" r="5" fill="#c4c4c4"/><path d="M5 4.3V8" stroke="#3c3c3c" stroke-width="1.6"/><circle cx="5" cy="2.5" r="0.9" fill="#3c3c3c"/></svg>
<div class="t " style="left:1982px;top:85px;font-size:12.5px">Inspector</div>
<svg class="i" style="left:2524px;top:86px;" width="9" height="11" viewBox="0 0 9 11"><path d="M0 5H9V11H0Z" fill="#c4c4c4"/><path d="M2.2 5.5V3A2.3 2.3 0 0 1 6.8 3V5.5" fill="none" stroke="#c4c4c4" stroke-width="1.3"/></svg>
<svg class="i" style="left:2544px;top:86px;" width="3" height="12" viewBox="0 0 3 12"><circle cx="1.5" cy="1.5" r="1.3" fill="#c4c4c4"/><circle cx="1.5" cy="6" r="1.3" fill="#c4c4c4"/><circle cx="1.5" cy="10.5" r="1.3" fill="#c4c4c4"/></svg>
<div class="a" style="left:1956px;top:103px;width:604px;height:1315px;background:#383838"></div>
<div class="a" style="left:1956px;top:103px;width:604px;height:58px;background:#3c3c3c"></div>
<svg class="i" style="left:1963px;top:113px;" width="21" height="23" viewBox="0 0 21 23"><path d="M10.5 1L20 6V17L10.5 22L1 17V6Z M1 6L10.5 11L20 6 M10.5 11V22" fill="none" stroke="#c4c4c4" stroke-width="1.3" stroke-linejoin="round"/></svg>
<svg class="i" style="left:1982px;top:134px;" width="7" height="4" viewBox="0 0 7 4"><path d="M0 0H7L3.5 4Z" fill="#c4c4c4"/></svg>
<div class="a" style="left:2001px;top:114px;width:14px;height:14px;background:#2a2a2a;border:1px solid #212121;border-radius:3px"></div><svg class="i" style="left:2004px;top:117px;" width="9" height="8" viewBox="0 0 9 8"><path d="M0.8 4L3.5 6.8L8.3 1" fill="none" stroke="#e8e8e8" stroke-width="1.5"/></svg>
<div class="a" style="left:2021px;top:112px;width:458px;height:18px;background:#2a2a2a;border:1px solid #212121;border-radius:3px"></div>
<div class="t b" style="left:2024px;top:115px;color:#d8d8d8;font-size:12px">RepairBot</div>
<div class="a" style="left:2483px;top:114px;width:14px;height:14px;background:#2a2a2a;border:1px solid #212121;border-radius:3px"></div>
<div class="t " style="left:2501px;top:114px;">Static</div>
<svg class="i" style="left:2546px;top:118px;" width="8" height="5" viewBox="0 0 8 5"><path d="M0 0H8L4 4Z" fill="#c4c4c4"/></svg>
<div class="t " style="left:1996px;top:138px;">Tag</div>
<div class="a" style="left:2021px;top:137px;width:247px;height:16px;background:#515151;border:1px solid #303030;border-radius:3px"></div><div class="t " style="left:2025px;top:138.0px;color:#c4c4c4">Untagged</div><svg class="i" style="left:2255px;top:142.0px;" width="8" height="5" viewBox="0 0 8 5"><path d="M0 0H8L4 4Z" fill="#c4c4c4"/></svg>
<div class="t " style="left:2283px;top:138px;">Layer</div>
<div class="a" style="left:2319px;top:137px;width:236px;height:16px;background:#515151;border:1px solid #303030;border-radius:3px"></div><div class="t " style="left:2323px;top:138.0px;color:#c4c4c4">Default</div><svg class="i" style="left:2542px;top:142.0px;" width="8" height="5" viewBox="0 0 8 5"><path d="M0 0H8L4 4Z" fill="#c4c4c4"/></svg>
<div class="a" style="left:1956px;top:162px;width:604px;height:1px;background:#1f1f1f"></div><div class="a" style="left:1956px;top:163px;width:604px;height:20px;background:#3e3e3e"></div><div class="a" style="left:1956px;top:183px;width:604px;height:1px;background:#2a2a2a"></div><svg class="i" style="left:1963px;top:169px;" width="9" height="8" viewBox="0 0 9 8"><path d="M0 0H9L4.5 8Z" fill="#8a8a8a"/></svg><svg class="i" style="left:1978px;top:168px;" width="14" height="12" viewBox="0 0 14 12"><path d="M7 0V6.5" stroke="#8fd44a" stroke-width="2"/><path d="M7 6.5L1 10.5" stroke="#4aa8f0" stroke-width="2"/><path d="M7 6.5L13 10.5" stroke="#f06a3a" stroke-width="2"/></svg><div class="t b" style="left:2016px;top:166px;color:#d2d2d2;font-size:12.4px">Transform</div><svg class="i" style="left:2501px;top:167px;" width="11" height="11" viewBox="0 0 11 11"><circle cx="5.5" cy="5.5" r="5.5" fill="#c4c4c4"/><path d="M3.6 4.2A1.9 1.9 0 1 1 6.2 5.8Q5.5 6.2 5.5 7" fill="none" stroke="#3c3c3c" stroke-width="1.3"/><circle cx="5.5" cy="8.7" r="0.85" fill="#3c3c3c"/></svg><svg class="i" style="left:2522px;top:167px;" width="11" height="11" viewBox="0 0 11 11"><path d="M0 3H11M0 8H11" stroke="#c4c4c4" stroke-width="1.2"/><path d="M7 0.5V5.5M4 5.5V10.5" stroke="#c4c4c4" stroke-width="1.4"/></svg><svg class="i" style="left:2545px;top:167px;" width="3" height="12" viewBox="0 0 3 12"><circle cx="1.5" cy="1.5" r="1.3" fill="#c4c4c4"/><circle cx="1.5" cy="6" r="1.3" fill="#c4c4c4"/><circle cx="1.5" cy="10.5" r="1.3" fill="#c4c4c4"/></svg>
<div class="t " style="left:1975px;top:190px;">Position</div>
<div class="t " style="left:2209px;top:190px;">X</div>
<div class="a" style="left:2223px;top:188px;width:97px;height:18px;background:#2a2a2a;border:1px solid #212121;border-radius:3px"></div>
<div class="t " style="left:2226px;top:190px;color:#d2d2d2">5.088681</div>
<div class="t " style="left:2326px;top:190px;">Y</div>
<div class="a" style="left:2341px;top:188px;width:97px;height:18px;background:#2a2a2a;border:1px solid #212121;border-radius:3px"></div>
<div class="t " style="left:2344px;top:190px;color:#d2d2d2">-2.236764</div>
<div class="t " style="left:2444px;top:190px;">Z</div>
<div class="a" style="left:2458px;top:188px;width:97px;height:18px;background:#2a2a2a;border:1px solid #212121;border-radius:3px"></div>
<div class="t " style="left:2461px;top:190px;color:#d2d2d2">0</div>
<div class="t " style="left:1975px;top:210px;">Rotation</div>
<div class="t " style="left:2209px;top:210px;">X</div>
<div class="a" style="left:2223px;top:208px;width:97px;height:18px;background:#2a2a2a;border:1px solid #212121;border-radius:3px"></div>
<div class="t " style="left:2226px;top:210px;color:#d2d2d2">0</div>
<div class="t " style="left:2326px;top:210px;">Y</div>
<div class="a" style="left:2341px;top:208px;width:97px;height:18px;background:#2a2a2a;border:1px solid #212121;border-radius:3px"></div>
<div class="t " style="left:2344px;top:210px;color:#d2d2d2">0</div>
<div class="t " style="left:2444px;top:210px;">Z</div>
<div class="a" style="left:2458px;top:208px;width:97px;height:18px;background:#2a2a2a;border:1px solid #212121;border-radius:3px"></div>
<div class="t " style="left:2461px;top:210px;color:#d2d2d2">0</div>
<div class="t " style="left:1975px;top:230px;">Scale</div>
<div class="t " style="left:2209px;top:230px;">X</div>
<div class="a" style="left:2223px;top:228px;width:97px;height:18px;background:#2a2a2a;border:1px solid #212121;border-radius:3px"></div>
<div class="t " style="left:2226px;top:230px;color:#d2d2d2">1</div>
<div class="t " style="left:2326px;top:230px;">Y</div>
<div class="a" style="left:2341px;top:228px;width:97px;height:18px;background:#2a2a2a;border:1px solid #212121;border-radius:3px"></div>
<div class="t " style="left:2344px;top:230px;color:#d2d2d2">1</div>
<div class="t " style="left:2444px;top:230px;">Z</div>
<div class="a" style="left:2458px;top:228px;width:97px;height:18px;background:#2a2a2a;border:1px solid #212121;border-radius:3px"></div>
<div class="t " style="left:2461px;top:230px;color:#d2d2d2">1</div>
<svg class="i" style="left:2187px;top:232px;" width="13" height="9" viewBox="0 0 13 9"><path d="M4.5 1H3A3.5 3.5 0 0 0 3 8H4.5M8.5 1H10A3.5 3.5 0 0 1 10 8H8.5M4 4.5H9" fill="none" stroke="#c4c4c4" stroke-width="1.2"/><path d="M1 0L12 9" stroke="#c4c4c4" stroke-width="1.2"/></svg>
<div class="a" style="left:1956px;top:255px;width:604px;height:1px;background:#1f1f1f"></div><div class="a" style="left:1956px;top:256px;width:604px;height:20px;background:#3e3e3e"></div><div class="a" style="left:1956px;top:276px;width:604px;height:1px;background:#2a2a2a"></div><svg class="i" style="left:1963px;top:262px;" width="9" height="8" viewBox="0 0 9 8"><path d="M0 0H9L4.5 8Z" fill="#8a8a8a"/></svg><svg class="i" style="left:1977px;top:259px;" width="15" height="15" viewBox="0 0 15 15"><path d="M1 1H14V14H1Z" fill="none" stroke="#a98be8" stroke-width="1.2" stroke-dasharray="3 2"/><circle cx="7" cy="6" r="2.5" fill="#c4c4c4"/><path d="M3 11Q7.5 6 12 11Q7.5 16 3 11Z" fill="#c4c4c4"/><circle cx="7.5" cy="11" r="1.5" fill="#3e3e3e"/></svg><div class="a" style="left:1996px;top:259px;width:14px;height:14px;background:#2a2a2a;border:1px solid #212121;border-radius:3px"></div><svg class="i" style="left:1999px;top:262px;" width="9" height="8" viewBox="0 0 9 8"><path d="M0.8 4L3.5 6.8L8.3 1" fill="none" stroke="#e8e8e8" stroke-width="1.5"/></svg><div class="t b" style="left:2016px;top:259px;color:#d2d2d2;font-size:12.4px">Sprite Renderer</div><svg class="i" style="left:2501px;top:260px;" width="11" height="11" viewBox="0 0 11 11"><circle cx="5.5" cy="5.5" r="5.5" fill="#c4c4c4"/><path d="M3.6 4.2A1.9 1.9 0 1 1 6.2 5.8Q5.5 6.2 5.5 7" fill="none" stroke="#3c3c3c" stroke-width="1.3"/><circle cx="5.5" cy="8.7" r="0.85" fill="#3c3c3c"/></svg><svg class="i" style="left:2522px;top:260px;" width="11" height="11" viewBox="0 0 11 11"><path d="M0 3H11M0 8H11" stroke="#c4c4c4" stroke-width="1.2"/><path d="M7 0.5V5.5M4 5.5V10.5" stroke="#c4c4c4" stroke-width="1.4"/></svg><svg class="i" style="left:2545px;top:260px;" width="3" height="12" viewBox="0 0 3 12"><circle cx="1.5" cy="1.5" r="1.3" fill="#c4c4c4"/><circle cx="1.5" cy="6" r="1.3" fill="#c4c4c4"/><circle cx="1.5" cy="10.5" r="1.3" fill="#c4c4c4"/></svg>
<div class="t " style="left:1975px;top:283px;">Sprite</div>
<div class="a" style="left:2208px;top:281px;width:347px;height:18px;background:#2a2a2a;border:1px solid #212121;border-radius:3px"></div>
<div class="a" style="left:2537px;top:282px;width:1px;height:16px;background:#303030"></div>
<svg class="i" style="left:2211px;top:285px;" width="10" height="10" viewBox="0 0 10 10"><path d="M0.5 0.5H9.5V9.5H0.5Z" fill="none" stroke="#a98be8" stroke-width="1" stroke-dasharray="2 1.5"/><rect x="3" y="3" width="4" height="4" fill="#d0d0d0"/></svg>
<div class="t " style="left:2224px;top:283px;color:#d2d2d2">RepairBot</div>
<svg class="i" style="left:2540px;top:285px;" width="11" height="11" viewBox="0 0 11 11"><circle cx="5.5" cy="5.5" r="4.8" fill="none" stroke="#c4c4c4" stroke-width="1.1"/><circle cx="5.5" cy="5.5" r="2" fill="#c4c4c4"/></svg>
<div class="a" style="left:1975px;top:302px;width:580px;height:17px;background:#585858;border:1px solid #303030;border-radius:3px"></div>
<div class="t" style="left:1975px;top:303px;width:580px;text-align:center;color:#d2d2d2">Open Sprite Editor</div>
<div class="t " style="left:1975px;top:329px;">Color</div>
<div class="a" style="left:2208px;top:327px;width:347px;height:18px;background:#2a2a2a;border:1px solid #212121;border-radius:3px"></div>
<div class="a" style="left:2209px;top:328px;width:328px;height:16px;background:#ffffff"></div>
<svg class="i" style="left:2541px;top:330px;" width="11" height="11" viewBox="0 0 11 11"><path d="M1 10L7 4M6 2L9 5" stroke="#c4c4c4" stroke-width="1.6"/><path d="M7.5 0.5A2 2 0 0 1 10.5 3.5L9 5L6 2Z" fill="#c4c4c4"/></svg>
<div class="t " style="left:1975px;top:349px;">Flip</div>
<div class="a" style="left:2208px;top:349px;width:14px;height:14px;background:#2a2a2a;border:1px solid #212121;border-radius:3px"></div>
<div class="t " style="left:2225px;top:349px;">X</div>
<div class="a" style="left:2238px;top:349px;width:14px;height:14px;background:#2a2a2a;border:1px solid #212121;border-radius:3px"></div>
<div class="t " style="left:2256px;top:349px;">Y</div>
<div class="t " style="left:1975px;top:369px;">Draw Mode</div>
<div class="a" style="left:2208px;top:368px;width:347px;height:16px;background:#515151;border:1px solid #303030;border-radius:3px"></div><div class="t " style="left:2212px;top:369.0px;color:#c4c4c4">Simple</div><svg class="i" style="left:2542px;top:373.0px;" width="8" height="5" viewBox="0 0 8 5"><path d="M0 0H8L4 4Z" fill="#c4c4c4"/></svg>
<div class="t " style="left:1975px;top:389px;">Mask Interaction</div>
<div class="a" style="left:2208px;top:388px;width:347px;height:16px;background:#515151;border:1px solid #303030;border-radius:3px"></div><div class="t " style="left:2212px;top:389.0px;color:#c4c4c4">None</div><svg class="i" style="left:2542px;top:393.0px;" width="8" height="5" viewBox="0 0 8 5"><path d="M0 0H8L4 4Z" fill="#c4c4c4"/></svg>
<div class="t " style="left:1975px;top:409px;">Sprite Sort Point</div>
<div class="a" style="left:2208px;top:408px;width:347px;height:16px;background:#515151;border:1px solid #303030;border-radius:3px"></div><div class="t " style="left:2212px;top:409.0px;color:#c4c4c4">Center</div><svg class="i" style="left:2542px;top:413.0px;" width="8" height="5" viewBox="0 0 8 5"><path d="M0 0H8L4 4Z" fill="#c4c4c4"/></svg>
<div class="t " style="left:1975px;top:429px;">Material</div>
<div class="a" style="left:2208px;top:427px;width:347px;height:18px;background:#2a2a2a;border:1px solid #212121;border-radius:3px"></div>
<div class="a" style="left:2537px;top:428px;width:1px;height:16px;background:#303030"></div>
<svg class="i" style="left:2211px;top:431px;" width="10" height="10" viewBox="0 0 10 10"><circle cx="5" cy="5" r="4.6" fill="#5fc3f5"/><path d="M2 3.5A4 4 0 0 0 6 9" fill="none" stroke="#e8f6ff" stroke-width="1.2"/></svg>
<div class="t " style="left:2224px;top:429px;color:#d2d2d2">Sprites-Default</div>
<svg class="i" style="left:2540px;top:431px;" width="11" height="11" viewBox="0 0 11 11"><circle cx="5.5" cy="5.5" r="4.8" fill="none" stroke="#c4c4c4" stroke-width="1.1"/><circle cx="5.5" cy="5.5" r="2" fill="#c4c4c4"/></svg>
<svg class="i" style="left:1963px;top:452px;" width="9" height="8" viewBox="0 0 9 8"><path d="M0 0H9L4.5 8Z" fill="#8a8a8a"/></svg>
<div class="t b" style="left:1976px;top:449px;color:#c8c8c8;font-size:12.4px">Additional Settings</div>
<div class="t " style="left:1990px;top:469px;">Sorting Layer</div>
<div class="a" style="left:2208px;top:468px;width:347px;height:16px;background:#515151;border:1px solid #303030;border-radius:3px"></div><div class="t " style="left:2212px;top:469.0px;color:#c4c4c4">Default</div><svg class="i" style="left:2542px;top:473.0px;" width="8" height="5" viewBox="0 0 8 5"><path d="M0 0H8L4 4Z" fill="#c4c4c4"/></svg>
<div class="t " style="left:1990px;top:489px;">Order in Layer</div>
<div class="a" style="left:2208px;top:487px;width:347px;height:18px;background:#2a2a2a;border:1px solid #212121;border-radius:3px"></div>
<div class="t " style="left:2211px;top:489px;color:#d2d2d2">0</div>
<div class="a" style="left:1956px;top:515px;width:604px;height:1px;background:#1f1f1f"></div><div class="a" style="left:1956px;top:516px;width:604px;height:20px;background:#3e3e3e"></div><div class="a" style="left:1956px;top:536px;width:604px;height:1px;background:#2a2a2a"></div><svg class="i" style="left:1963px;top:522px;" width="9" height="8" viewBox="0 0 9 8"><path d="M0 0H9L4.5 8Z" fill="#8a8a8a"/></svg><svg class="i" style="left:1977px;top:519px;" width="13" height="15" viewBox="0 0 13 15"><path d="M0 1.5Q0 0 1.5 0H9L13 4V13.5Q13 15 11.5 15H1.5Q0 15 0 13.5Z" fill="#ececec"/><path d="M4.5 3.5L3.5 12M8.5 3.5L7.5 12M2.5 6.2H10M2 9.3H9.5" stroke="#2a7a2a" stroke-width="1.2"/></svg><div class="a" style="left:1996px;top:519px;width:14px;height:14px;background:#2a2a2a;border:1px solid #212121;border-radius:3px"></div><svg class="i" style="left:1999px;top:522px;" width="9" height="8" viewBox="0 0 9 8"><path d="M0.8 4L3.5 6.8L8.3 1" fill="none" stroke="#e8e8e8" stroke-width="1.5"/></svg><div class="t b" style="left:2016px;top:519px;color:#d2d2d2;font-size:12.4px">Player Movement (Script)</div><svg class="i" style="left:2501px;top:520px;" width="11" height="11" viewBox="0 0 11 11"><circle cx="5.5" cy="5.5" r="5.5" fill="#c4c4c4"/><path d="M3.6 4.2A1.9 1.9 0 1 1 6.2 5.8Q5.5 6.2 5.5 7" fill="none" stroke="#3c3c3c" stroke-width="1.3"/><circle cx="5.5" cy="8.7" r="0.85" fill="#3c3c3c"/></svg><svg class="i" style="left:2522px;top:520px;" width="11" height="11" viewBox="0 0 11 11"><path d="M0 3H11M0 8H11" stroke="#c4c4c4" stroke-width="1.2"/><path d="M7 0.5V5.5M4 5.5V10.5" stroke="#c4c4c4" stroke-width="1.4"/></svg><svg class="i" style="left:2545px;top:520px;" width="3" height="12" viewBox="0 0 3 12"><circle cx="1.5" cy="1.5" r="1.3" fill="#c4c4c4"/><circle cx="1.5" cy="6" r="1.3" fill="#c4c4c4"/><circle cx="1.5" cy="10.5" r="1.3" fill="#c4c4c4"/></svg>
<div class="t " style="left:1975px;top:541px;color:#8c8c8c">Script</div>
<div class="a" style="left:2208px;top:539px;width:347px;height:18px;background:#2e2e2e;border:1px solid #282828;border-radius:3px"></div>
<svg class="i" style="left:2212px;top:543px;" width="9" height="11" viewBox="0 0 9 11"><path d="M0 0H6L9 3V11H0Z" fill="#8a9a8a"/><path d="M3 3L2.5 9M6 3L5.5 9M1.5 5H7.5M1.5 7H7.5" stroke="#3d6a3d" stroke-width="0.8"/></svg>
<div class="t " style="left:2225px;top:541px;color:#8c8c8c">PlayerMovement</div>
<svg class="i" style="left:2540px;top:543px;" width="11" height="11" viewBox="0 0 11 11"><circle cx="5.5" cy="5.5" r="4.8" fill="none" stroke="#8a8a8a" stroke-width="1.1"/><circle cx="5.5" cy="5.5" r="2" fill="#8a8a8a"/></svg>
<div class="a" style="left:1956px;top:564px;width:604px;height:1px;background:#1f1f1f"></div>
<div class="a" style="left:1956px;top:565px;width:604px;height:54px;background:#3a3a3a"></div>
<div class="a" style="left:1974px;top:573px;width:29px;height:29px;background:#323232;border-radius:2px"></div>
<div class="a" style="left:1976px;top:575px;width:24px;height:24px;background:#ffffff"></div>
<div class="t " style="left:2012px;top:571px;color:#c4c4c4;font-size:14px">Sprites-Default (Material)</div>
<svg class="i" style="left:2531px;top:573px;" width="11" height="11" viewBox="0 0 11 11"><circle cx="5.5" cy="5.5" r="5.5" fill="#c4c4c4"/><path d="M3.6 4.2A1.9 1.9 0 1 1 6.2 5.8Q5.5 6.2 5.5 7" fill="none" stroke="#3c3c3c" stroke-width="1.3"/><circle cx="5.5" cy="8.7" r="0.85" fill="#3c3c3c"/></svg>
<svg class="i" style="left:2550px;top:573px;" width="3" height="12" viewBox="0 0 3 12"><circle cx="1.5" cy="1.5" r="1.3" fill="#c4c4c4"/><circle cx="1.5" cy="6" r="1.3" fill="#c4c4c4"/><circle cx="1.5" cy="10.5" r="1.3" fill="#c4c4c4"/></svg>
<div class="t " style="left:2009px;top:594px;color:#8c8c8c">Shader</div>
<div class="a" style="left:2060px;top:594px;width:399px;height:16px;background:#474747;border:1px solid #303030;border-radius:3px"></div><div class="t " style="left:2064px;top:595.0px;color:#8c8c8c">Sprites/Default</div><svg class="i" style="left:2446px;top:599.0px;" width="8" height="5" viewBox="0 0 8 5"><path d="M0 0H8L4 4Z" fill="#8c8c8c"/></svg>
<div class="a" style="left:2463px;top:594px;width:44px;height:16px;background:#585858;border:1px solid #303030;border-radius:3px"></div>
<div class="t " style="left:2471px;top:595px;color:#d2d2d2">Edit...</div>
<div class="a" style="left:2513px;top:594px;width:42px;height:16px;background:#585858;border:1px solid #303030;border-radius:3px"></div>
<svg class="i" style="left:2520px;top:598px;" width="11" height="8" viewBox="0 0 11 8"><path d="M3 1H11M4 4H11M4 7H11M0 1H1.5M1 4H2.5M1 7H2.5" stroke="#c4c4c4" stroke-width="1.1"/></svg>
<svg class="i" style="left:2542px;top:599px;" width="8" height="5" viewBox="0 0 8 5"><path d="M0 0H8L4 4Z" fill="#c4c4c4"/></svg>
<svg class="i" style="left:1963px;top:604px;" width="8" height="9" viewBox="0 0 8 9"><path d="M0 0L8 4.5L0 9Z" fill="#7a7a7a"/></svg>
<div class="a" style="left:1956px;top:619px;width:604px;height:1px;background:#1f1f1f"></div>
<div class="a" style="left:1956px;top:630px;width:604px;height:1px;background:#262626"></div>
<div class="a" style="left:2144px;top:640px;width:228px;height:22px;background:#585858;border:1px solid #303030;border-radius:3px"></div>
<div class="t" style="left:2144px;top:644px;width:228px;text-align:center;color:#d2d2d2">Add Component</div>
<div class="a" style="left:2126px;top:633px;width:260px;height:42px;border:2px solid #f00"></div>
<div class="a" style="left:2013px;top:508px;width:183px;height:34px;border:2px solid #f00"></div>
<div class="a" style="left:1956px;top:1342px;width:604px;height:1px;background:#1f1f1f"></div>
<div class="a" style="left:1956px;top:1343px;width:604px;height:25px;background:#3c3c3c"></div>
<div class="a" style="left:1956px;top:1368px;width:604px;height:1px;background:#1f1f1f"></div>
<div class="t b" style="left:1960px;top:1348px;color:#c8c8c8;font-size:12.4px">Asset Labels</div>
<svg class="i" style="left:2537px;top:1374px;" width="19" height="15" viewBox="0 0 19 15"><ellipse cx="9.5" cy="7.5" rx="9.5" ry="7.5" fill="#2a5ca8"/><path d="M5.5 4H9.5L13.5 8L10 11.5L6 7.5Z" fill="#f0f0f0"/><circle cx="7.5" cy="5.8" r="0.9" fill="#2a5ca8"/></svg>
<div class="t " style="left:1960px;top:1398px;">AssetBundle</div>
<div class="a" style="left:2052px;top:1397px;width:384px;height:16px;background:#515151;border:1px solid #303030;border-radius:3px"></div><div class="t " style="left:2056px;top:1398.0px;color:#c4c4c4">None</div><svg class="i" style="left:2423px;top:1402.0px;" width="8" height="5" viewBox="0 0 8 5"><path d="M0 0H8L4 4Z" fill="#c4c4c4"/></svg>
<div class="a" style="left:2443px;top:1397px;width:113px;height:16px;background:#515151;border:1px solid #303030;border-radius:3px"></div><div class="t " style="left:2447px;top:1398.0px;color:#c4c4c4">None</div><svg class="i" style="left:2543px;top:1402.0px;" width="8" height="5" viewBox="0 0 8 5"><path d="M0 0H8L4 4Z" fill="#c4c4c4"/></svg>
<div class="a" style="left:0px;top:1418px;width:2560px;height:22px;background:#141414"></div>
<div class="a" style="left:2480px;top:1420px;width:1px;height:20px;background:#2a2a2a"></div>
<div class="a" style="left:2507px;top:1420px;width:1px;height:20px;background:#2a2a2a"></div>
<div class="a" style="left:2533px;top:1420px;width:1px;height:20px;background:#2a2a2a"></div>
<svg class="i" style="left:2487px;top:1423px;" width="14" height="14" viewBox="0 0 14 14"><ellipse cx="7" cy="8.5" rx="4.3" ry="5" fill="#b4b4b4"/><circle cx="7" cy="3" r="2.2" fill="#b4b4b4"/><path d="M1 5L2.5 6.5M13 5L11.5 6.5M0 9H2M14 9H12M1 13L2.5 11.5M13 13L11.5 11.5M0 0L14 14" stroke="#b4b4b4" stroke-width="1.1"/></svg>
<svg class="i" style="left:2513px;top:1423px;" width="14" height="14" viewBox="0 0 14 14"><ellipse cx="7" cy="3" rx="6" ry="2.5" fill="#b4b4b4"/><path d="M1 6Q7 9.5 13 6M1 9Q7 12.5 13 9M1 12Q7 15.5 13 12" fill="none" stroke="#b4b4b4" stroke-width="1.3"/><path d="M2 0L13 14" stroke="#b4b4b4" stroke-width="1.1"/></svg>
<svg class="i" style="left:2539px;top:1423px;" width="14" height="14" viewBox="0 0 14 14"><circle cx="7" cy="7" r="6.2" fill="none" stroke="#c4c4c4" stroke-width="1.2"/><path d="M3.8 7.2L6.2 9.5L10.3 4.8" fill="none" stroke="#c4c4c4" stroke-width="1.3"/></svg>
<div class="a" style="left:0px;top:867px;width:1954px;height:2px;background:#141414"></div>
<div class="a" style="left:0px;top:869px;width:1954px;height:24px;background:#141414"></div>
<div class="a" style="left:0px;top:869px;width:81px;height:24px;background:#3c3c3c;border-radius:4px 4px 0 0"></div>
<div class="a" style="left:0px;top:869px;width:81px;height:2px;background:#3b7fc4;border-radius:4px 4px 0 0"></div>
<svg class="i" style="left:9px;top:876px;" width="13" height="11" viewBox="0 0 13 11"><path d="M0 0H5L6.5 2H13V11H0Z" fill="#c4c4c4"/></svg>
<div class="t " style="left:25px;top:875px;font-size:12.5px">Project</div>
<svg class="i" style="left:92px;top:876px;" width="11" height="11" viewBox="0 0 11 11"><path d="M0.6 0.6H10.4V10.4H0.6Z" fill="none" stroke="#c4c4c4" stroke-width="1.2"/><path d="M2.5 3H8.5M2.5 5.5H8.5M2.5 8H6.5" stroke="#c4c4c4" stroke-width="1.1"/></svg>
<div class="t " style="left:107px;top:875px;font-size:12.5px">Console</div>
<svg class="i" style="left:1920px;top:876px;" width="9" height="11" viewBox="0 0 9 11"><path d="M0.7 5.5H8.3V10.3H0.7Z" fill="none" stroke="#c4c4c4" stroke-width="1.3"/><path d="M2.2 5.5V3A2.3 2.3 0 0 1 6.8 3" fill="none" stroke="#c4c4c4" stroke-width="1.3"/></svg>
<svg class="i" style="left:1940px;top:876px;" width="3" height="12" viewBox="0 0 3 12"><circle cx="1.5" cy="1.5" r="1.3" fill="#c4c4c4"/><circle cx="1.5" cy="6" r="1.3" fill="#c4c4c4"/><circle cx="1.5" cy="10.5" r="1.3" fill="#c4c4c4"/></svg>
<div class="a" style="left:0px;top:893px;width:1954px;height:20px;background:#3c3c3c"></div>
<div class="a" style="left:0px;top:913px;width:1954px;height:1px;background:#232323"></div>
<svg class="i" style="left:7px;top:897px;" width="12" height="12" viewBox="0 0 12 12"><path d="M6 0V12M0 6H12" stroke="#c8c8c8" stroke-width="2"/></svg><svg class="i" style="left:23px;top:901px;" width="8" height="4" viewBox="0 0 8 4"><path d="M0 0H8L4 4Z" fill="#c8c8c8"/></svg>
<div class="a" style="left:1487px;top:895px;width:318px;height:16px;background:#2a2a2a;border:1px solid #242424;border-radius:4px"></div>
<svg class="i" style="left:1491px;top:899px;" width="9" height="9" viewBox="0 0 9 9"><circle cx="3.5" cy="3.5" r="2.6" fill="none" stroke="#c4c4c4" stroke-width="1.3"/><path d="M5.4 5.4L8.5 8.5" stroke="#c4c4c4" stroke-width="1.6"/></svg>
<div class="a" style="left:1787px;top:896px;width:1px;height:14px;background:#242424"></div>
<svg class="i" style="left:1789px;top:898px;" width="12" height="11" viewBox="0 0 12 11"><path d="M4.5 0.6H11.4V7.4H4.5Z M0.6 6H4.5V10.4H0.6Z" fill="none" stroke="#c4c4c4" stroke-width="1.1"/><path d="M5.5 6.5L10 2M7 2H10V5" fill="none" stroke="#c4c4c4" stroke-width="1.1"/></svg>
<div class="a" style="left:1807px;top:893px;width:1px;height:20px;background:#2e2e2e"></div>
<div class="a" style="left:1833px;top:893px;width:1px;height:20px;background:#2e2e2e"></div>
<div class="a" style="left:1860px;top:893px;width:1px;height:20px;background:#2e2e2e"></div>
<div class="a" style="left:1886px;top:893px;width:1px;height:20px;background:#2e2e2e"></div>
<div class="a" style="left:1912px;top:893px;width:1px;height:20px;background:#2e2e2e"></div>
<svg class="i" style="left:1813px;top:897px;" width="13" height="13" viewBox="0 0 13 13"><rect x="2" y="0" width="5" height="5" fill="#b8b8b8"/><circle cx="4" cy="9" r="3.5" fill="#b8b8b8"/><path d="M9.5 3.5L13 10H6Z" fill="#b8b8b8"/></svg>
<svg class="i" style="left:1840px;top:898px;" width="12" height="12" viewBox="0 0 12 12"><path d="M6 0H12V6L5.5 12.5L-0.5 6.5Z" fill="#b8b8b8"/><circle cx="9" cy="3" r="1" fill="#3c3c3c"/></svg>
<svg class="i" style="left:1865px;top:897px;" width="14" height="14" viewBox="0 0 14 14"><path d="M4 0H10L14 4V10L10 14H4L0 10V4Z" fill="#d0d0d0"/><path d="M7 3V8.5" stroke="#3c3c3c" stroke-width="2"/><circle cx="7" cy="11" r="1.1" fill="#3c3c3c"/></svg>
<svg class="i" style="left:1892px;top:897px;" width="13" height="13" viewBox="0 0 13 13"><path d="M6.5 0L8.4 4.4L13 4.8L9.5 7.8L10.6 12.5L6.5 10L2.4 12.5L3.5 7.8L0 4.8L4.6 4.4Z" fill="#a0a0a0"/></svg>
<svg class="i" style="left:1917px;top:899px;" width="15" height="9" viewBox="0 0 15 9"><path d="M0.5 4.5Q7.5 -2.5 14.5 4.5Q7.5 11.5 0.5 4.5Z" fill="none" stroke="#8a8a8a" stroke-width="1.3"/><circle cx="7.5" cy="4.5" r="2.3" fill="#8a8a8a"/></svg>
<div class="t " style="left:1934px;top:896px;color:#b0b0b0">25</div>
<div class="a" style="left:0px;top:914px;width:194px;height:504px;background:#383838;overflow:hidden"></div>
<svg class="i" style="left:4px;top:918px;" width="9" height="8" viewBox="0 0 9 8"><path d="M0 0H9L4.5 8Z" fill="#7a7a7a"/></svg>
<svg class="i" style="left:18px;top:916px;" width="12" height="12" viewBox="0 0 12 12"><path d="M6 0L7.8 4L12 4.4L8.8 7.2L9.8 11.5L6 9.2L2.2 11.5L3.2 7.2L0 4.4L4.2 4Z" fill="#c4c4c4"/></svg>
<div class="t b" style="left:35px;top:915px;color:#c8c8c8;font-size:12.4px">Favorites</div>
<svg class="i" style="left:32px;top:932px;" width="13" height="13" viewBox="0 0 13 13"><circle cx="5" cy="5" r="4.2" fill="none" stroke="#c4c4c4" stroke-width="1.3"/><path d="M8 8L12 12" stroke="#c4c4c4" stroke-width="1.8"/></svg>
<div class="t " style="left:48px;top:931px;">All Materials</div>
<svg class="i" style="left:32px;top:948px;" width="13" height="13" viewBox="0 0 13 13"><circle cx="5" cy="5" r="4.2" fill="none" stroke="#c4c4c4" stroke-width="1.3"/><path d="M8 8L12 12" stroke="#c4c4c4" stroke-width="1.8"/></svg>
<div class="t " style="left:48px;top:947px;">All Models</div>
<svg class="i" style="left:32px;top:964px;" width="13" height="13" viewBox="0 0 13 13"><circle cx="5" cy="5" r="4.2" fill="none" stroke="#c4c4c4" stroke-width="1.3"/><path d="M8 8L12 12" stroke="#c4c4c4" stroke-width="1.8"/></svg>
<div class="t " style="left:48px;top:963px;">All Prefabs</div>
<div class="a" style="left:0px;top:993px;width:194px;height:16px;background:#4d4d4d"></div>
<svg class="i" style="left:4px;top:997px;" width="9" height="8" viewBox="0 0 9 8"><path d="M0 0H9L4.5 8Z" fill="#8a8a8a"/></svg>
<svg class="i" style="left:18px;top:996px;" width="14" height="11" viewBox="0 0 14 11"><path d="M0.6 10.4V1.2Q0.6 0.6 1.2 0.6H4.5L6 2.2H11.5Q12 2.2 12 2.8V4.5" fill="none" stroke="#c2c2c2" stroke-width="1.2"/><path d="M0.6 10.4L3 4.5H13.8L11.5 10.4Z" fill="#c2c2c2"/></svg>
<div class="t b" style="left:35px;top:994px;color:#d2d2d2;font-size:12.4px">Assets</div>
<svg class="i" style="left:32px;top:1011px;" width="13" height="11" viewBox="0 0 13 11"><path d="M0 1Q0 0 1 0H4.5L6 2H12Q13 2 13 3V10Q13 11 12 11H1Q0 11 0 10Z" fill="#c2c2c2"/></svg>
<div class="t " style="left:48px;top:1010px;">Scenes</div>
<svg class="i" style="left:4px;top:1029px;" width="9" height="8" viewBox="0 0 9 8"><path d="M0 0H9L4.5 8Z" fill="#7a7a7a"/></svg>
<svg class="i" style="left:18px;top:1027px;" width="14" height="11" viewBox="0 0 14 11"><path d="M0.6 10.4V1.2Q0.6 0.6 1.2 0.6H4.5L6 2.2H11.5Q12 2.2 12 2.8V4.5" fill="none" stroke="#c2c2c2" stroke-width="1.2"/><path d="M0.6 10.4L3 4.5H13.8L11.5 10.4Z" fill="#c2c2c2"/></svg>
<div class="t b" style="left:35px;top:1026px;color:#c8c8c8;font-size:12.4px">Packages</div>
<div class="a" style="left:0;top:914px;width:194px;height:504px;overflow:hidden"><div class="a" style="left:0;top:-914px;width:194px;height:1440px"><svg class="i" style="left:19px;top:1045px;" width="8" height="9" viewBox="0 0 8 9"><path d="M0 0L8 4.5L0 9Z" fill="#7a7a7a"/></svg><svg class="i" style="left:32px;top:1044px;" width="13" height="11" viewBox="0 0 13 11"><path d="M0 1Q0 0 1 0H4.5L6 2H12Q13 2 13 3V10Q13 11 12 11H1Q0 11 0 10Z" fill="#c2c2c2"/></svg><div class="t " style="left:48px;top:1042px;">2D Animation</div><svg class="i" style="left:19px;top:1061px;" width="8" height="9" viewBox="0 0 8 9"><path d="M0 0L8 4.5L0 9Z" fill="#7a7a7a"/></svg><svg class="i" style="left:32px;top:1060px;" width="13" height="11" viewBox="0 0 13 11"><path d="M0 1Q0 0 1 0H4.5L6 2H12Q13 2 13 3V10Q13 11 12 11H1Q0 11 0 10Z" fill="#c2c2c2"/></svg><div class="t " style="left:48px;top:1058px;">2D Aseprite Importer</div><svg class="i" style="left:19px;top:1077px;" width="8" height="9" viewBox="0 0 8 9"><path d="M0 0L8 4.5L0 9Z" fill="#7a7a7a"/></svg><svg class="i" style="left:32px;top:1076px;" width="13" height="11" viewBox="0 0 13 11"><path d="M0 1Q0 0 1 0H4.5L6 2H12Q13 2 13 3V10Q13 11 12 11H1Q0 11 0 10Z" fill="#c2c2c2"/></svg><div class="t " style="left:48px;top:1074px;">2D Common</div><svg class="i" style="left:19px;top:1093px;" width="8" height="9" viewBox="0 0 8 9"><path d="M0 0L8 4.5L0 9Z" fill="#7a7a7a"/></svg><svg class="i" style="left:32px;top:1092px;" width="13" height="11" viewBox="0 0 13 11"><path d="M0 1Q0 0 1 0H4.5L6 2H12Q13 2 13 3V10Q13 11 12 11H1Q0 11 0 10Z" fill="#c2c2c2"/></svg><div class="t " style="left:48px;top:1090px;">2D Pixel Perfect</div><svg class="i" style="left:19px;top:1109px;" width="8" height="9" viewBox="0 0 8 9"><path d="M0 0L8 4.5L0 9Z" fill="#7a7a7a"/></svg><svg class="i" style="left:32px;top:1108px;" width="13" height="11" viewBox="0 0 13 11"><path d="M0 1Q0 0 1 0H4.5L6 2H12Q13 2 13 3V10Q13 11 12 11H1Q0 11 0 10Z" fill="#c2c2c2"/></svg><div class="t " style="left:48px;top:1106px;">2D PSD Importer</div><svg class="i" style="left:19px;top:1125px;" width="8" height="9" viewBox="0 0 8 9"><path d="M0 0L8 4.5L0 9Z" fill="#7a7a7a"/></svg><svg class="i" style="left:32px;top:1124px;" width="13" height="11" viewBox="0 0 13 11"><path d="M0 1Q0 0 1 0H4.5L6 2H12Q13 2 13 3V10Q13 11 12 11H1Q0 11 0 10Z" fill="#c2c2c2"/></svg><div class="t " style="left:48px;top:1122px;">2D Sprite</div><svg class="i" style="left:19px;top:1141px;" width="8" height="9" viewBox="0 0 8 9"><path d="M0 0L8 4.5L0 9Z" fill="#7a7a7a"/></svg><svg class="i" style="left:32px;top:1140px;" width="13" height="11" viewBox="0 0 13 11"><path d="M0 1Q0 0 1 0H4.5L6 2H12Q13 2 13 3V10Q13 11 12 11H1Q0 11 0 10Z" fill="#c2c2c2"/></svg><div class="t " style="left:48px;top:1138px;">2D SpriteShape</div><svg class="i" style="left:19px;top:1157px;" width="8" height="9" viewBox="0 0 8 9"><path d="M0 0L8 4.5L0 9Z" fill="#7a7a7a"/></svg><svg class="i" style="left:32px;top:1156px;" width="13" height="11" viewBox="0 0 13 11"><path d="M0 1Q0 0 1 0H4.5L6 2H12Q13 2 13 3V10Q13 11 12 11H1Q0 11 0 10Z" fill="#c2c2c2"/></svg><div class="t " style="left:48px;top:1154px;">2D Tilemap Editor</div><svg class="i" style="left:19px;top:1173px;" width="8" height="9" viewBox="0 0 8 9"><path d="M0 0L8 4.5L0 9Z" fill="#7a7a7a"/></svg><svg class="i" style="left:32px;top:1172px;" width="13" height="11" viewBox="0 0 13 11"><path d="M0 1Q0 0 1 0H4.5L6 2H12Q13 2 13 3V10Q13 11 12 11H1Q0 11 0 10Z" fill="#c2c2c2"/></svg><div class="t " style="left:48px;top:1170px;">2D Tilemap Extras</div><svg class="i" style="left:19px;top:1189px;" width="8" height="9" viewBox="0 0 8 9"><path d="M0 0L8 4.5L0 9Z" fill="#7a7a7a"/></svg><svg class="i" style="left:32px;top:1188px;" width="13" height="11" viewBox="0 0 13 11"><path d="M0 1Q0 0 1 0H4.5L6 2H12Q13 2 13 3V10Q13 11 12 11H1Q0 11 0 10Z" fill="#c2c2c2"/></svg><div class="t " style="left:48px;top:1186px;">2D Tooling</div><svg class="i" style="left:19px;top:1205px;" width="8" height="9" viewBox="0 0 8 9"><path d="M0 0L8 4.5L0 9Z" fill="#7a7a7a"/></svg><svg class="i" style="left:32px;top:1204px;" width="13" height="11" viewBox="0 0 13 11"><path d="M0 1Q0 0 1 0H4.5L6 2H12Q13 2 13 3V10Q13 11 12 11H1Q0 11 0 10Z" fill="#c2c2c2"/></svg><div class="t " style="left:48px;top:1202px;">Burst</div><svg class="i" style="left:19px;top:1221px;" width="8" height="9" viewBox="0 0 8 9"><path d="M0 0L8 4.5L0 9Z" fill="#7a7a7a"/></svg><svg class="i" style="left:32px;top:1220px;" width="13" height="11" viewBox="0 0 13 11"><path d="M0 1Q0 0 1 0H4.5L6 2H12Q13 2 13 3V10Q13 11 12 11H1Q0 11 0 10Z" fill="#c2c2c2"/></svg><div class="t " style="left:48px;top:1218px;">Collections</div><svg class="i" style="left:19px;top:1237px;" width="8" height="9" viewBox="0 0 8 9"><path d="M0 0L8 4.5L0 9Z" fill="#7a7a7a"/></svg><svg class="i" style="left:32px;top:1236px;" width="13" height="11" viewBox="0 0 13 11"><path d="M0 1Q0 0 1 0H4.5L6 2H12Q13 2 13 3V10Q13 11 12 11H1Q0 11 0 10Z" fill="#c2c2c2"/></svg><div class="t " style="left:48px;top:1234px;">Custom NUnit</div><svg class="i" style="left:19px;top:1253px;" width="8" height="9" viewBox="0 0 8 9"><path d="M0 0L8 4.5L0 9Z" fill="#7a7a7a"/></svg><svg class="i" style="left:32px;top:1252px;" width="13" height="11" viewBox="0 0 13 11"><path d="M0 1Q0 0 1 0H4.5L6 2H12Q13 2 13 3V10Q13 11 12 11H1Q0 11 0 10Z" fill="#c2c2c2"/></svg><div class="t " style="left:48px;top:1250px;">Input System</div><svg class="i" style="left:19px;top:1269px;" width="8" height="9" viewBox="0 0 8 9"><path d="M0 0L8 4.5L0 9Z" fill="#7a7a7a"/></svg><svg class="i" style="left:32px;top:1268px;" width="13" height="11" viewBox="0 0 13 11"><path d="M0 1Q0 0 1 0H4.5L6 2H12Q13 2 13 3V10Q13 11 12 11H1Q0 11 0 10Z" fill="#c2c2c2"/></svg><div class="t " style="left:48px;top:1266px;">JetBrains Rider Editor</div><svg class="i" style="left:19px;top:1285px;" width="8" height="9" viewBox="0 0 8 9"><path d="M0 0L8 4.5L0 9Z" fill="#7a7a7a"/></svg><svg class="i" style="left:32px;top:1284px;" width="13" height="11" viewBox="0 0 13 11"><path d="M0 1Q0 0 1 0H4.5L6 2H12Q13 2 13 3V10Q13 11 12 11H1Q0 11 0 10Z" fill="#c2c2c2"/></svg><div class="t " style="left:48px;top:1282px;">Mathematics</div><svg class="i" style="left:19px;top:1301px;" width="8" height="9" viewBox="0 0 8 9"><path d="M0 0L8 4.5L0 9Z" fill="#7a7a7a"/></svg><svg class="i" style="left:32px;top:1300px;" width="13" height="11" viewBox="0 0 13 11"><path d="M0 1Q0 0 1 0H4.5L6 2H12Q13 2 13 3V10Q13 11 12 11H1Q0 11 0 10Z" fill="#c2c2c2"/></svg><div class="t " style="left:48px;top:1298px;">Mono Cecil</div><svg class="i" style="left:19px;top:1317px;" width="8" height="9" viewBox="0 0 8 9"><path d="M0 0L8 4.5L0 9Z" fill="#7a7a7a"/></svg><svg class="i" style="left:32px;top:1316px;" width="13" height="11" viewBox="0 0 13 11"><path d="M0 1Q0 0 1 0H4.5L6 2H12Q13 2 13 3V10Q13 11 12 11H1Q0 11 0 10Z" fill="#c2c2c2"/></svg><div class="t " style="left:48px;top:1314px;">Multiplayer Center</div><svg class="i" style="left:19px;top:1333px;" width="8" height="9" viewBox="0 0 8 9"><path d="M0 0L8 4.5L0 9Z" fill="#7a7a7a"/></svg><svg class="i" style="left:32px;top:1332px;" width="13" height="11" viewBox="0 0 13 11"><path d="M0 1Q0 0 1 0H4.5L6 2H12Q13 2 13 3V10Q13 11 12 11H1Q0 11 0 10Z" fill="#c2c2c2"/></svg><div class="t " style="left:48px;top:1330px;">Performance testing API</div><svg class="i" style="left:19px;top:1349px;" width="8" height="9" viewBox="0 0 8 9"><path d="M0 0L8 4.5L0 9Z" fill="#7a7a7a"/></svg><svg class="i" style="left:32px;top:1348px;" width="13" height="11" viewBox="0 0 13 11"><path d="M0 1Q0 0 1 0H4.5L6 2H12Q13 2 13 3V10Q13 11 12 11H1Q0 11 0 10Z" fill="#c2c2c2"/></svg><div class="t " style="left:48px;top:1346px;">Test Framework</div><svg class="i" style="left:19px;top:1365px;" width="8" height="9" viewBox="0 0 8 9"><path d="M0 0L8 4.5L0 9Z" fill="#7a7a7a"/></svg><svg class="i" style="left:32px;top:1364px;" width="13" height="11" viewBox="0 0 13 11"><path d="M0 1Q0 0 1 0H4.5L6 2H12Q13 2 13 3V10Q13 11 12 11H1Q0 11 0 10Z" fill="#c2c2c2"/></svg><div class="t " style="left:48px;top:1362px;">Timeline</div><svg class="i" style="left:19px;top:1381px;" width="8" height="9" viewBox="0 0 8 9"><path d="M0 0L8 4.5L0 9Z" fill="#7a7a7a"/></svg><svg class="i" style="left:32px;top:1380px;" width="13" height="11" viewBox="0 0 13 11"><path d="M0 1Q0 0 1 0H4.5L6 2H12Q13 2 13 3V10Q13 11 12 11H1Q0 11 0 10Z" fill="#c2c2c2"/></svg><div class="t " style="left:48px;top:1378px;">Unity UI</div><svg class="i" style="left:19px;top:1397px;" width="8" height="9" viewBox="0 0 8 9"><path d="M0 0L8 4.5L0 9Z" fill="#7a7a7a"/></svg><svg class="i" style="left:32px;top:1396px;" width="13" height="11" viewBox="0 0 13 11"><path d="M0 1Q0 0 1 0H4.5L6 2H12Q13 2 13 3V10Q13 11 12 11H1Q0 11 0 10Z" fill="#c2c2c2"/></svg><div class="t " style="left:48px;top:1394px;">Unity Version Control</div><svg class="i" style="left:19px;top:1413px;" width="8" height="9" viewBox="0 0 8 9"><path d="M0 0L8 4.5L0 9Z" fill="#7a7a7a"/></svg><svg class="i" style="left:32px;top:1412px;" width="13" height="11" viewBox="0 0 13 11"><path d="M0 1Q0 0 1 0H4.5L6 2H12Q13 2 13 3V10Q13 11 12 11H1Q0 11 0 10Z" fill="#c2c2c2"/></svg><div class="t " style="left:48px;top:1410px;">Visual Scripting</div></div></div>
<div class="a" style="left:194px;top:914px;width:13px;height:504px;background:#383838"></div>
<svg class="i" style="left:197px;top:920px;" width="8" height="5" viewBox="0 0 8 5"><path d="M0 5H8L4 0Z" fill="#c4c4c4"/></svg>
<div class="a" style="left:196px;top:930px;width:10px;height:449px;background:#5e5e5e;border-radius:5px"></div>
<svg class="i" style="left:197px;top:1408px;" width="8" height="5" viewBox="0 0 8 5"><path d="M0 0H8L4 5Z" fill="#c4c4c4"/></svg>
<div class="a" style="left:207px;top:914px;width:1px;height:504px;background:#232323"></div>
<div class="a" style="left:208px;top:914px;width:1746px;height:504px;background:#333333"></div>
<div class="a" style="left:208px;top:914px;width:1746px;height:21px;background:#3c3c3c"></div>
<div class="t b" style="left:212px;top:917px;color:#c4c4c4;font-size:12.4px">Assets</div>
<svg class="i" style="left:231px;top:957px;" width="48" height="40" viewBox="0 0 48 40"><path d="M0 4Q0 0 4 0H18L22 7H44Q48 7 48 11V36Q48 40 44 40H4Q0 40 0 36Z" fill="#c2c2c2"/></svg>
<svg class="i" style="left:302px;top:951px;" width="60" height="52" viewBox="0 0 60 52"><path d="M0 6L19 0V38L0 44Z" fill="#f4f4f4"/><path d="M19 0L38 6V44L19 38Z" fill="#b8b8b8"/><path d="M38 6L57 0V38L38 44Z" fill="#f0f0f0"/><path d="M46 14L33 34H41L36 51L51 29H43Z" fill="#2aa8e0"/></svg>
<svg class="i" style="left:354px;top:969px;" width="16" height="16" viewBox="0 0 16 16"><circle cx="8" cy="8" r="7.5" fill="#c8c8c8" stroke="#555" stroke-width="0.6"/><path d="M5.5 4L12 8L5.5 12Z" fill="#2e2e2e"/></svg>
<svg class="i" style="left:383px;top:949px;" width="48" height="56" viewBox="0 0 48 56"><path d="M0 4Q0 0 4 0H36L48 11V52Q48 56 44 56H4Q0 56 0 52Z" fill="#ececec"/><path d="M16 12L13 44M30 12L27 44M8 23H38M7 35H37" stroke="#236b23" stroke-width="4.2"/></svg>
<div class="a" style="left:453px;top:947px;width:60px;height:60px;background:#2f2f2f;border:1px solid #2a2a2a;border-radius:2px"></div>
<svg class="i" style="left:455px;top:952px" width="56" height="48" viewBox="10 26 120 103"><g stroke="#333" stroke-width="1.5"><ellipse cx="70.3" cy="96" rx="60" ry="32.6" fill="#898989"/><path d="M10.3 97A60 32.6 0 0 1 130.3 93.5Q70 122 10.3 97Z" fill="#c8c8c8" stroke="none"/><path d="M33.5 74A36.5 31 0 0 1 106.5 74Q70 86 33.5 74Z" fill="#00a0e4"/><circle cx="81" cy="62.5" r="6" fill="#a6e2fb" stroke="none"/><circle cx="86.5" cy="53.5" r="3.5" fill="#a6e2fb" stroke="none"/><circle cx="76.1" cy="35.9" r="4.4" fill="#e0e0e0" stroke="none"/><path d="M55.5 46C55 34 60 26.8 68.75 26.8C77.5 26.8 82.5 34 82 46Q68.75 48.5 55.5 46Z" fill="#c8c8c8"/><ellipse cx="110" cy="90" rx="7" ry="6" fill="#dedede" stroke="none"/></g></svg>
<svg class="i" style="left:506px;top:969px;" width="16" height="16" viewBox="0 0 16 16"><circle cx="8" cy="8" r="7.5" fill="#c8c8c8" stroke="#555" stroke-width="0.6"/><path d="M5.5 4L12 8L5.5 12Z" fill="#2e2e2e"/></svg>
<div class="t" style="left:215px;top:1010px;width:80px;text-align:center;font-size:11.6px;color:#c4c4c4">Scenes</div>
<div class="t" style="left:290px;top:1010px;width:80px;text-align:center;font-size:11.6px;color:#c4c4c4">InputSyste...</div>
<div class="t" style="left:367px;top:1010px;width:80px;text-align:center;font-size:11.6px;color:#c4c4c4">PlayerMove...</div>
<div class="t" style="left:443px;top:1010px;width:80px;text-align:center;font-size:11.6px;color:#c4c4c4">RepairBot</div>
<div class="a" style="left:371px;top:937px;width:72px;height:96px;border:2px solid #f00"></div>
<div class="a" style="left:208px;top:1397px;width:1746px;height:21px;background:#3c3c3c"></div>
<svg class="i" style="left:213px;top:1402px;" width="13" height="11" viewBox="0 0 13 11"><path d="M0 1Q0 0 1 0H4.5L6 2H12Q13 2 13 3V10Q13 11 12 11H1Q0 11 0 10Z" fill="#c2c2c2"/></svg>
<div class="t " style="left:228px;top:1400px;">Assets</div>
<div class="a" style="left:1883px;top:1406px;width:54px;height:2px;background:#5a5a5a"></div>
<svg class="i" style="left:1909px;top:1402px;" width="10" height="10" viewBox="0 0 10 10"><circle cx="5" cy="5" r="4.5" fill="#b8b8b8"/></svg>
<div class="a" style="left:843px;top:436px;width:322px;height:578px;background:#f9f9f9;border:1px solid #dedede;border-radius:8px;box-shadow:0 4px 10px rgba(0,0,0,0.22)"></div>
<div class="a" style="left:849px;top:439px;width:310px;height:22px;background:#f0f0f0;border-radius:4px"></div>
<div class="cm" style="left:881px;top:442px">Create</div>
<svg class="i" style="left:1146px;top:445px;" width="5" height="9" viewBox="0 0 5 9"><path d="M0.7 0.7L4.3 4.5L0.7 8.3" fill="none" stroke="#222" stroke-width="1.1"/></svg>
<div class="cm" style="left:881px;top:464px">Show in Explorer</div>
<div class="cm" style="left:881px;top:486px">Open</div>
<div class="cm d" style="left:881px;top:508px">Open Scene Additive</div>
<div class="cm d" style="left:881px;top:530px">Delete</div>
<div class="cm d" style="left:881px;top:552px">Rename</div>
<div class="cm" style="left:881px;top:574px">Copy Path</div>
<div class="cm" style="left:1000px;top:574px;width:140px;text-align:right">Alt+Ctrl+C</div>
<div class="a" style="left:852px;top:597px;width:305px;height:1px;background:#e0e0e0"></div>
<div class="cm d" style="left:881px;top:605px">View in Package Manager</div>
<div class="cm d" style="left:881px;top:627px">Create UPM Package...</div>
<div class="cm" style="left:881px;top:649px">Import Package</div>
<svg class="i" style="left:1146px;top:652px;" width="5" height="9" viewBox="0 0 5 9"><path d="M0.7 0.7L4.3 4.5L0.7 8.3" fill="none" stroke="#222" stroke-width="1.1"/></svg>
<div class="cm" style="left:881px;top:671px">Export As Asset Package...</div>
<div class="cm d" style="left:881px;top:693px">Export As UPM Package...</div>
<div class="cm" style="left:881px;top:715px">Import New Asset...</div>
<div class="cm d" style="left:881px;top:737px">Extract Material SubAsset</div>
<div class="a" style="left:852px;top:760px;width:305px;height:1px;background:#e0e0e0"></div>
<div class="cm d" style="left:881px;top:768px">Find References In Scene</div>
<div class="cm" style="left:881px;top:790px">Find References In Project</div>
<div class="cm" style="left:881px;top:812px">Select Dependencies</div>
<div class="a" style="left:852px;top:835px;width:305px;height:1px;background:#e0e0e0"></div>
<div class="cm" style="left:881px;top:843px">Refresh</div>
<div class="cm" style="left:1000px;top:843px;width:140px;text-align:right">Ctrl+R</div>
<div class="cm" style="left:881px;top:865px">Reimport</div>
<div class="cm" style="left:881px;top:887px">Reimport All</div>
<div class="a" style="left:852px;top:910px;width:305px;height:1px;background:#e0e0e0"></div>
<div class="cm" style="left:881px;top:918px">Open C# Project</div>
<div class="cm" style="left:881px;top:940px">View in Import Activity Window</div>
<div class="cm" style="left:881px;top:962px">Update UXML Schema</div>
<div class="a" style="left:852px;top:985px;width:305px;height:1px;background:#e0e0e0"></div>
<div class="cm" style="left:881px;top:993px">Properties...</div>
<div class="cm" style="left:1000px;top:993px;width:140px;text-align:right">Alt+P</div>
<div class="a" style="left:1161px;top:436px;width:215px;height:569px;background:#f9f9f9;border:1px solid #dedede;border-radius:8px;box-shadow:0 4px 10px rgba(0,0,0,0.22)"></div>
<div class="a" style="left:1166px;top:483px;width:204px;height:22px;background:#f0f0f0;border-radius:4px"></div>
<div class="cm" style="left:1198px;top:442px">Folder</div>
<div class="cm" style="left:1198px;top:464px">Material</div>
<div class="cm" style="left:1198px;top:486px">MonoBehaviour Script</div>
<div class="cm d" style="left:1198px;top:508px">Prefab Variant</div>
<div class="a" style="left:1169px;top:531px;width:198px;height:1px;background:#e0e0e0"></div>
<div class="cm" style="left:1198px;top:539px">2D</div>
<svg class="i" style="left:1356px;top:542px;" width="5" height="9" viewBox="0 0 5 9"><path d="M0.7 0.7L4.3 4.5L0.7 8.3" fill="none" stroke="#222" stroke-width="1.1"/></svg>
<div class="cm" style="left:1198px;top:561px">Animation</div>
<svg class="i" style="left:1356px;top:564px;" width="5" height="9" viewBox="0 0 5 9"><path d="M0.7 0.7L4.3 4.5L0.7 8.3" fill="none" stroke="#222" stroke-width="1.1"/></svg>
<div class="cm" style="left:1198px;top:583px">Audio</div>
<svg class="i" style="left:1356px;top:586px;" width="5" height="9" viewBox="0 0 5 9"><path d="M0.7 0.7L4.3 4.5L0.7 8.3" fill="none" stroke="#222" stroke-width="1.1"/></svg>
<div class="cm" style="left:1198px;top:605px">Rendering</div>
<svg class="i" style="left:1356px;top:608px;" width="5" height="9" viewBox="0 0 5 9"><path d="M0.7 0.7L4.3 4.5L0.7 8.3" fill="none" stroke="#222" stroke-width="1.1"/></svg>
<div class="cm" style="left:1198px;top:627px">Scene</div>
<svg class="i" style="left:1356px;top:630px;" width="5" height="9" viewBox="0 0 5 9"><path d="M0.7 0.7L4.3 4.5L0.7 8.3" fill="none" stroke="#222" stroke-width="1.1"/></svg>
<div class="cm" style="left:1198px;top:649px">Scripting</div>
<svg class="i" style="left:1356px;top:652px;" width="5" height="9" viewBox="0 0 5 9"><path d="M0.7 0.7L4.3 4.5L0.7 8.3" fill="none" stroke="#222" stroke-width="1.1"/></svg>
<div class="cm" style="left:1198px;top:671px">Shader</div>
<svg class="i" style="left:1356px;top:674px;" width="5" height="9" viewBox="0 0 5 9"><path d="M0.7 0.7L4.3 4.5L0.7 8.3" fill="none" stroke="#222" stroke-width="1.1"/></svg>
<div class="cm" style="left:1198px;top:693px">Testing</div>
<svg class="i" style="left:1356px;top:696px;" width="5" height="9" viewBox="0 0 5 9"><path d="M0.7 0.7L4.3 4.5L0.7 8.3" fill="none" stroke="#222" stroke-width="1.1"/></svg>
<div class="cm" style="left:1198px;top:715px">Terrain</div>
<svg class="i" style="left:1356px;top:718px;" width="5" height="9" viewBox="0 0 5 9"><path d="M0.7 0.7L4.3 4.5L0.7 8.3" fill="none" stroke="#222" stroke-width="1.1"/></svg>
<div class="cm" style="left:1198px;top:737px">Text Core</div>
<svg class="i" style="left:1356px;top:740px;" width="5" height="9" viewBox="0 0 5 9"><path d="M0.7 0.7L4.3 4.5L0.7 8.3" fill="none" stroke="#222" stroke-width="1.1"/></svg>
<div class="cm" style="left:1198px;top:759px">TextMeshPro</div>
<svg class="i" style="left:1356px;top:762px;" width="5" height="9" viewBox="0 0 5 9"><path d="M0.7 0.7L4.3 4.5L0.7 8.3" fill="none" stroke="#222" stroke-width="1.1"/></svg>
<div class="cm" style="left:1198px;top:781px">Timeline</div>
<svg class="i" style="left:1356px;top:784px;" width="5" height="9" viewBox="0 0 5 9"><path d="M0.7 0.7L4.3 4.5L0.7 8.3" fill="none" stroke="#222" stroke-width="1.1"/></svg>
<div class="cm" style="left:1198px;top:803px">UI Toolkit</div>
<svg class="i" style="left:1356px;top:806px;" width="5" height="9" viewBox="0 0 5 9"><path d="M0.7 0.7L4.3 4.5L0.7 8.3" fill="none" stroke="#222" stroke-width="1.1"/></svg>
<div class="cm" style="left:1198px;top:825px">Visual Scripting</div>
<svg class="i" style="left:1356px;top:828px;" width="5" height="9" viewBox="0 0 5 9"><path d="M0.7 0.7L4.3 4.5L0.7 8.3" fill="none" stroke="#222" stroke-width="1.1"/></svg>
<div class="cm" style="left:1198px;top:847px">Vulkan Settings</div>
<svg class="i" style="left:1356px;top:850px;" width="5" height="9" viewBox="0 0 5 9"><path d="M0.7 0.7L4.3 4.5L0.7 8.3" fill="none" stroke="#222" stroke-width="1.1"/></svg>
<div class="a" style="left:1169px;top:870px;width:198px;height:1px;background:#e0e0e0"></div>
<div class="cm" style="left:1198px;top:878px">Physics Material</div>
<div class="cm" style="left:1198px;top:900px">GUI Skin</div>
<div class="cm" style="left:1198px;top:922px">Custom Font</div>
<div class="a" style="left:1169px;top:945px;width:198px;height:1px;background:#e0e0e0"></div>
<div class="cm" style="left:1198px;top:953px">D3D12 Settings</div>
<svg class="i" style="left:1356px;top:956px;" width="5" height="9" viewBox="0 0 5 9"><path d="M0.7 0.7L4.3 4.5L0.7 8.3" fill="none" stroke="#222" stroke-width="1.1"/></svg>
<div class="a" style="left:1169px;top:976px;width:198px;height:1px;background:#e0e0e0"></div>
<div class="cm" style="left:1198px;top:984px">Input Actions</div>
<div class="a" style="left:870px;top:434px;width:161px;height:30px;border:2px solid #f00"></div>
<div class="a" style="left:1172px;top:478px;width:176px;height:30px;border:2px solid #f00"></div>
<svg class="i" style="left:0;top:0" width="2560" height="1440"><path d="M424 1003H1326V997L2237 1009.5L1326 1022V1016H424Z" fill="none" stroke="#f00" stroke-width="2.2" stroke-linejoin="miter"/></svg>
</body></html>
